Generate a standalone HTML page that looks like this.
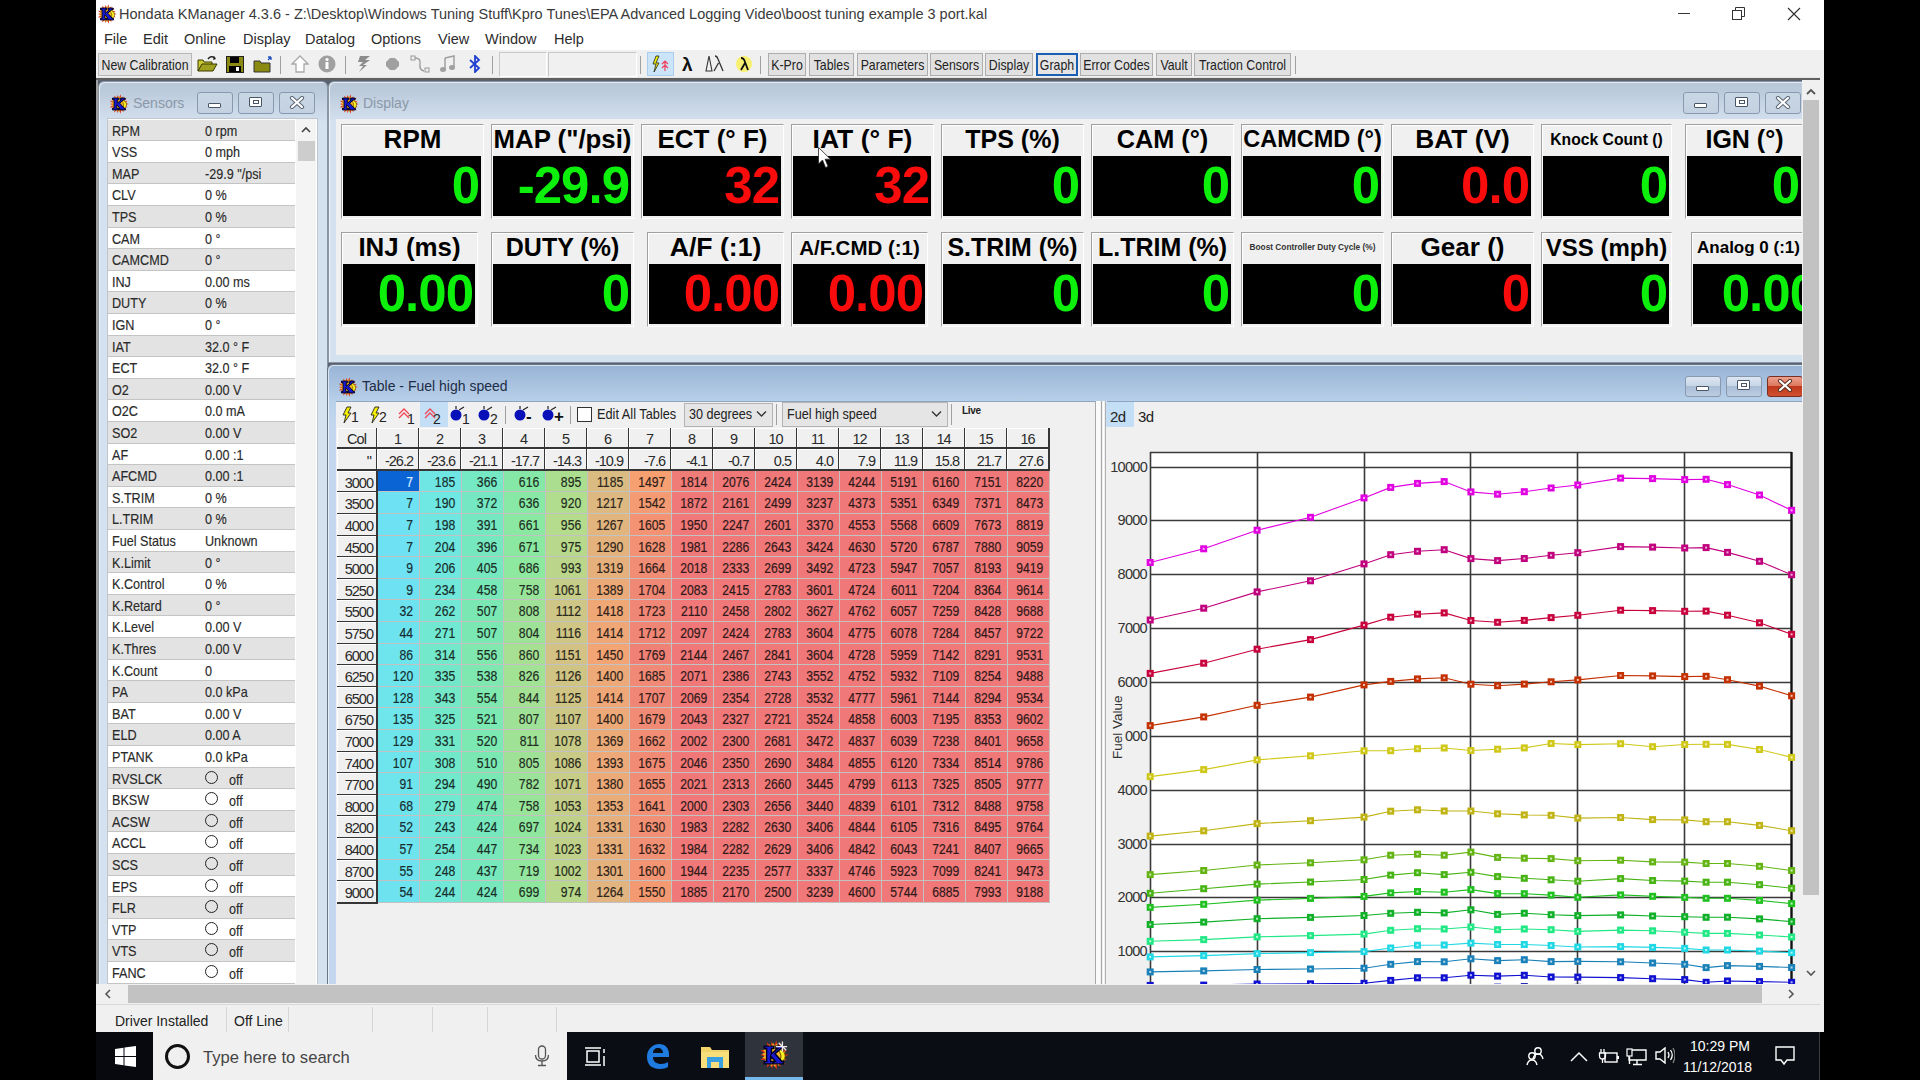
<!DOCTYPE html><html><head><meta charset="utf-8"><title>KManager</title><style>
*{box-sizing:border-box}
.cell span{display:inline-block;transform:scaleX(.84);transform-origin:100% 50%}
html,body{margin:0;padding:0}
body{width:1920px;height:1080px;background:#000;position:relative;overflow:hidden;font-family:"Liberation Sans",sans-serif;color:#000}
div{line-height:1}
.mf{border-radius:6px 6px 0 0}
.tb{font-size:14.5px;color:#222;transform:scaleX(.85);transform-origin:50% 0}
.btn{position:absolute;border:1px solid #adadad;background:#e1e1e1}
.wbtn{position:absolute;border:1px solid #8c9bb0;border-radius:3px;background:linear-gradient(#e4ecf5,#c9d7e8)}
.sl{font-size:14.5px;color:#2a2a2a;transform:scaleX(.87);transform-origin:0 0;-webkit-text-stroke:.15px currentColor}
.gl{position:absolute;text-align:center;font-weight:bold;color:#000;white-space:nowrap}
.gv{position:absolute;text-align:right;font-weight:bold;font-size:51px;letter-spacing:-1px;white-space:nowrap}
.cell{position:absolute;height:21px;text-align:right;font-size:14.5px;color:#1c1c1c;-webkit-text-stroke:.2px currentColor;padding-right:6px;padding-top:4px;border-right:1px solid #c2c2c2;border-bottom:1px solid #c2c2c2}
.hc{position:absolute;text-align:center;font-size:14.5px;letter-spacing:-1px;color:#2a2a2a;background:#f0f0f0;border-right:2px solid #363636;border-bottom:2px solid #363636;box-shadow:inset 1px 1px 0 #fff}
</style></head><body>
<div style="position:absolute;left:96px;top:0px;width:1728px;height:1032px;background:#ffffff"></div>
<svg style="position:absolute;left:97px;top:4px" width="20" height="20" viewBox="0 0 32 32">
<polygon points="31.8,16.0 25.8,17.7 29.6,21.0 24.7,21.0 28.1,26.2 22.4,23.7 23.2,28.6 19.4,25.4 18.7,31.6 16.0,26.0 13.5,30.3 12.6,25.4 8.1,29.7 9.6,23.7 4.9,25.3 7.3,21.0 1.2,21.4 6.2,17.7 1.5,16.0 6.2,14.3 1.2,10.6 7.3,11.0 4.9,6.7 9.6,8.3 8.1,2.3 12.6,6.6 13.5,1.7 16.0,6.0 18.7,0.4 19.4,6.6 23.2,3.4 22.4,8.3 28.1,5.8 24.7,11.0 29.6,11.0 25.8,14.3" fill="#e03010"/>
<polygon points="28.9,17.2 25.2,18.5 27.8,21.5 23.8,21.5 25.2,25.2 21.4,23.8 21.5,27.8 18.4,25.2 17.1,29.0 15.1,25.5 12.6,28.5 12.0,24.6 8.5,26.6 9.3,22.7 5.3,23.4 7.4,20.0 3.4,19.3 6.5,16.8 3.1,14.8 6.8,13.5 4.2,10.5 8.2,10.5 6.8,6.8 10.6,8.2 10.5,4.2 13.6,6.8 14.9,3.0 16.9,6.5 19.4,3.5 20.0,7.4 23.5,5.4 22.7,9.3 26.7,8.6 24.6,12.0 28.6,12.7 25.5,15.2" fill="#f8b828"/>
<path d="M19 9q9 2 9 8t-8 7q4-3 3.5-7T19 9z" fill="#fff020" stroke="#302000" stroke-width=".8"/>
<path transform="translate(15 16) scale(.86) translate(-16 -16)" d="M5 5h12v3h-3v6.5l7.5-6.5h-2V5h9v3h-2.5l-7.5 6.5 8.5 9.5h2v3H16.5v-3h2.5l-6-6.5v6.5h3v3H5v-3h3V8H5z" fill="#1818d0" stroke="#000020" stroke-width="1.8"/>
</svg>
<div style="position:absolute;left:119px;top:7px;white-space:pre;font-size:14.5px;color:#3a3a3a">Hondata KManager 4.3.6 - Z:\Desktop\Windows Tuning Stuff\Kpro Tunes\EPA Advanced Logging Video\boost tuning example 3 port.kal</div>
<div style="position:absolute;left:1678px;top:13px;width:12px;height:1px;background:#333"></div>
<svg style="position:absolute;left:1732px;top:7px" width="14" height="14" viewBox="0 0 14 14"><rect x="0.5" y="3.5" width="9" height="9" fill="none" stroke="#333"/><path d="M3.5 3.5V0.5h9v9h-3" fill="none" stroke="#333"/></svg>
<svg style="position:absolute;left:1787px;top:7px" width="14" height="14" viewBox="0 0 14 14"><path d="M1 1L13 13M13 1L1 13" stroke="#333" stroke-width="1.2"/></svg>
<div style="position:absolute;left:104px;top:32px;white-space:pre;font-size:14.5px;color:#2c2c2c">File</div>
<div style="position:absolute;left:143px;top:32px;white-space:pre;font-size:14.5px;color:#2c2c2c">Edit</div>
<div style="position:absolute;left:184px;top:32px;white-space:pre;font-size:14.5px;color:#2c2c2c">Online</div>
<div style="position:absolute;left:243px;top:32px;white-space:pre;font-size:14.5px;color:#2c2c2c">Display</div>
<div style="position:absolute;left:305px;top:32px;white-space:pre;font-size:14.5px;color:#2c2c2c">Datalog</div>
<div style="position:absolute;left:371px;top:32px;white-space:pre;font-size:14.5px;color:#2c2c2c">Options</div>
<div style="position:absolute;left:438px;top:32px;white-space:pre;font-size:14.5px;color:#2c2c2c">View</div>
<div style="position:absolute;left:485px;top:32px;white-space:pre;font-size:14.5px;color:#2c2c2c">Window</div>
<div style="position:absolute;left:554px;top:32px;white-space:pre;font-size:14.5px;color:#2c2c2c">Help</div>
<div style="position:absolute;left:96px;top:50px;width:1724px;height:28px;background:#f0f0f0"></div>
<div style="position:absolute;left:96px;top:77px;width:1724px;height:1px;background:#e6e6e6"></div>
<div style="position:absolute;left:96px;top:78px;width:1724px;height:2px;background:#606060"></div>
<div class="btn" style="left:98px;top:53px;width:94px;height:23px;background:#e3e3e3;border-color:#b8b8b8"></div>
<div class="tb" style="position:absolute;left:68px;top:58px;width:154px;text-align:center;white-space:nowrap">New Calibration</div>
<svg style="position:absolute;left:197px;top:55px" width="21" height="18" viewBox="0 0 21 18">
<path d="M1 5h5l1 2h8v3H5l-4 6z" fill="#c8c830" stroke="#3a3a00" stroke-width="1"/>
<path d="M1 16l4-7h15l-4 7z" fill="#a0a020" stroke="#3a3a00" stroke-width="1"/>
<path d="M11 4q3-4 7-1" fill="none" stroke="#222" stroke-width="1.5"/><path d="M17 1l2 3-3 1z" fill="#222"/></svg>
<svg style="position:absolute;left:226px;top:56px" width="18" height="17" viewBox="0 0 18 17">
<rect x="0.5" y="0.5" width="17" height="16" fill="#8a8a10" stroke="#222"/><rect x="4" y="1" width="9" height="6" fill="#000"/>
<rect x="3" y="10" width="12" height="6" fill="#000"/><rect x="10" y="11" width="3" height="4" fill="#fff"/></svg>
<svg style="position:absolute;left:253px;top:55px" width="21" height="18" viewBox="0 0 21 18">
<path d="M1 6h6l1 2h9v9H1z" fill="#8a8a10" stroke="#333"/><path d="M15 2l3 0M18 2v3M18 2l-3 3" stroke="#2050c0" stroke-width="1.3"/></svg>
<div style="position:absolute;left:280px;top:56px;width:1px;height:18px;background:#a0a0a0"></div>
<svg style="position:absolute;left:291px;top:55px" width="18" height="18" viewBox="0 0 18 18">
<path d="M9 1L1 9h4v8h8V9h4z" fill="#fff" stroke="#a8a8a8" stroke-width="1.3"/></svg>
<svg style="position:absolute;left:318px;top:55px" width="18" height="18" viewBox="0 0 18 18">
<circle cx="9" cy="9" r="8.5" fill="#a0a0a0"/><rect x="7.5" y="7" width="3" height="7" fill="#fff"/><circle cx="9" cy="4.5" r="1.6" fill="#fff"/></svg>
<div style="position:absolute;left:345px;top:56px;width:1px;height:18px;background:#a0a0a0"></div>
<svg style="position:absolute;left:356px;top:55px" width="16" height="18" viewBox="0 0 16 18">
<path d="M4 1h10l-5 4h5l-7 5h4L3 17l4-6H3l4-4H2z" fill="#8c8c8c"/></svg>
<svg style="position:absolute;left:386px;top:58px" width="13" height="12" viewBox="0 0 13 12"><path d="M4 0h5l4 4v4l-4 4H4L0 8V4z" fill="#a0a0a0"/></svg>
<svg style="position:absolute;left:410px;top:55px" width="21" height="20" viewBox="0 0 21 20">
<rect x="1" y="1" width="4" height="4" fill="none" stroke="#999"/><path d="M5 3q6 0 5 6t4 7" fill="none" stroke="#999" stroke-width="1.3"/><rect x="15" y="13" width="4" height="4" fill="none" stroke="#999"/></svg>
<svg style="position:absolute;left:440px;top:55px" width="15" height="18" viewBox="0 0 15 18">
<path d="M5 3l9-2v11" fill="none" stroke="#a0a0a0" stroke-width="1.5"/><path d="M5 3v11" stroke="#a0a0a0" stroke-width="1.5"/><ellipse cx="3" cy="14.5" rx="3" ry="2.5" fill="#a0a0a0"/><ellipse cx="12" cy="12.5" rx="3" ry="2.5" fill="#a0a0a0"/></svg>
<svg style="position:absolute;left:468px;top:55px" width="14" height="18" viewBox="0 0 14 18">
<path d="M2 5l9 8-4 4V1l4 4-9 8" fill="none" stroke="#2040d0" stroke-width="1.8"/></svg>
<div style="position:absolute;left:492px;top:56px;width:1px;height:18px;background:#a0a0a0"></div>
<div style="position:absolute;left:499px;top:52px;width:48px;height:25px;background:#f0f0f0;border:1px solid #c8c8c8;border-right-color:#fff;border-bottom-color:#fff"></div>
<div style="position:absolute;left:548px;top:52px;width:89px;height:25px;background:#f0f0f0;border:1px solid #c8c8c8;border-right-color:#fff;border-bottom-color:#fff"></div>
<div style="position:absolute;left:640px;top:56px;width:1px;height:18px;background:#a0a0a0"></div>
<div style="position:absolute;left:647px;top:52px;width:27px;height:24px;background:#cce4f7;border:1px solid #a8cdef"></div>
<svg style="position:absolute;left:650px;top:55px" width="22" height="18" viewBox="0 0 22 18">
<path d="M6 1l-3 8h3l-2 8 5-9H6l3-7z" fill="#f0f000" stroke="#222" stroke-width=".8"/>
<path d="M12 9l3-3 3 3M12 13l3-3 3 3M15 6v10" fill="none" stroke="#f04060" stroke-width="1.2"/></svg>
<div style="position:absolute;left:682px;top:55px;white-space:pre;font-size:19px;font-weight:bold;color:#111">λ</div>
<svg style="position:absolute;left:705px;top:55px" width="20" height="18" viewBox="0 0 20 18">
<path d="M4 1L1 16h6z" fill="none" stroke="#333" stroke-width="1.1"/><path d="M10 1q2 0 3 3l5 12M13.5 8L9 16" fill="none" stroke="#333" stroke-width="1.3"/></svg>
<svg style="position:absolute;left:735px;top:55px" width="18" height="18" viewBox="0 0 18 18">
<circle cx="9" cy="9" r="8" fill="#f8f070"/><path d="M6 3q3 0 4 4l3 8M10 8l-4 7" fill="none" stroke="#111" stroke-width="1.8"/></svg>
<div style="position:absolute;left:760px;top:56px;width:1px;height:18px;background:#a0a0a0"></div>
<div class="btn" style="left:768px;top:53px;width:38px;height:23px;"></div>
<div class="tb" style="position:absolute;left:738px;top:58px;width:98px;text-align:center;white-space:nowrap">K-Pro</div>
<div class="btn" style="left:809px;top:53px;width:45px;height:23px;"></div>
<div class="tb" style="position:absolute;left:779px;top:58px;width:105px;text-align:center;white-space:nowrap">Tables</div>
<div class="btn" style="left:857px;top:53px;width:71px;height:23px;"></div>
<div class="tb" style="position:absolute;left:827px;top:58px;width:131px;text-align:center;white-space:nowrap">Parameters</div>
<div class="btn" style="left:930px;top:53px;width:53px;height:23px;"></div>
<div class="tb" style="position:absolute;left:900px;top:58px;width:113px;text-align:center;white-space:nowrap">Sensors</div>
<div class="btn" style="left:985px;top:53px;width:48px;height:23px;"></div>
<div class="tb" style="position:absolute;left:955px;top:58px;width:108px;text-align:center;white-space:nowrap">Display</div>
<div class="btn" style="left:1080px;top:53px;width:73px;height:23px;"></div>
<div class="tb" style="position:absolute;left:1050px;top:58px;width:133px;text-align:center;white-space:nowrap">Error Codes</div>
<div class="btn" style="left:1156px;top:53px;width:36px;height:23px;"></div>
<div class="tb" style="position:absolute;left:1126px;top:58px;width:96px;text-align:center;white-space:nowrap">Vault</div>
<div class="btn" style="left:1194px;top:53px;width:97px;height:23px;"></div>
<div class="tb" style="position:absolute;left:1164px;top:58px;width:157px;text-align:center;white-space:nowrap">Traction Control</div>
<div class="btn" style="left:1036px;top:53px;width:42px;height:23px;border:2px solid #1a5fb4;background:#e5e5e5"></div>
<div class="tb" style="position:absolute;left:1006px;top:58px;width:102px;text-align:center;white-space:nowrap">Graph</div>
<div style="position:absolute;left:1295px;top:56px;width:1px;height:18px;background:#a0a0a0"></div>
<div style="position:absolute;left:96px;top:80px;width:1724px;height:904px;background:#5a6272"></div>
<div style="position:absolute;left:96px;top:80px;width:2px;height:904px;background:#a0a0a0"></div>
<div class="mf" style="position:absolute;left:98px;top:81px;width:230px;height:940px;background:linear-gradient(180deg,#b8c8d9 0px,#bccbdc 10px,#c6d4e4 22px,#cfdded 36px,#d4e1ef 40px,#d4e1ef);border:1px solid #8a96a4;box-shadow:inset 1px 1px 0 rgba(255,255,255,.6)"></div>
<svg style="position:absolute;left:109px;top:94px" width="20" height="20" viewBox="0 0 32 32">
<polygon points="31.8,16.0 25.8,17.7 29.6,21.0 24.7,21.0 28.1,26.2 22.4,23.7 23.2,28.6 19.4,25.4 18.7,31.6 16.0,26.0 13.5,30.3 12.6,25.4 8.1,29.7 9.6,23.7 4.9,25.3 7.3,21.0 1.2,21.4 6.2,17.7 1.5,16.0 6.2,14.3 1.2,10.6 7.3,11.0 4.9,6.7 9.6,8.3 8.1,2.3 12.6,6.6 13.5,1.7 16.0,6.0 18.7,0.4 19.4,6.6 23.2,3.4 22.4,8.3 28.1,5.8 24.7,11.0 29.6,11.0 25.8,14.3" fill="#e03010"/>
<polygon points="28.9,17.2 25.2,18.5 27.8,21.5 23.8,21.5 25.2,25.2 21.4,23.8 21.5,27.8 18.4,25.2 17.1,29.0 15.1,25.5 12.6,28.5 12.0,24.6 8.5,26.6 9.3,22.7 5.3,23.4 7.4,20.0 3.4,19.3 6.5,16.8 3.1,14.8 6.8,13.5 4.2,10.5 8.2,10.5 6.8,6.8 10.6,8.2 10.5,4.2 13.6,6.8 14.9,3.0 16.9,6.5 19.4,3.5 20.0,7.4 23.5,5.4 22.7,9.3 26.7,8.6 24.6,12.0 28.6,12.7 25.5,15.2" fill="#f8b828"/>
<path d="M19 9q9 2 9 8t-8 7q4-3 3.5-7T19 9z" fill="#fff020" stroke="#302000" stroke-width=".8"/>
<path transform="translate(15 16) scale(.86) translate(-16 -16)" d="M5 5h12v3h-3v6.5l7.5-6.5h-2V5h9v3h-2.5l-7.5 6.5 8.5 9.5h2v3H16.5v-3h2.5l-6-6.5v6.5h3v3H5v-3h3V8H5z" fill="#1818d0" stroke="#000020" stroke-width="1.8"/>
</svg>
<div style="position:absolute;left:133px;top:96px;white-space:pre;font-size:14px;color:#8b98a8">Sensors</div>
<div class="wbtn" style="left:197px;top:92px;width:36px;height:22px;background:linear-gradient(#c9d6e4,#c3d1e1);border-color:#8898ae"></div>
<div style="position:absolute;left:208px;top:103px;width:13px;height:5px;border:1.5px solid #4a5566;background:#fff;border-radius:1px"></div>
<div class="wbtn" style="left:238px;top:92px;width:36px;height:22px;background:linear-gradient(#c9d6e4,#c3d1e1);border-color:#8898ae"></div>
<div style="position:absolute;left:249px;top:97px;width:13px;height:10px;border:1.5px solid #4a5566;background:#fff;border-radius:1px"></div><div style="position:absolute;left:253px;top:100px;width:6px;height:4px;border:1.5px solid #4a5566"></div>
<div class="wbtn" style="left:279px;top:92px;width:36px;height:22px;background:linear-gradient(#c9d6e4,#c3d1e1);border-color:#8898ae"></div>
<svg style="position:absolute;left:289px;top:96px" width="16" height="13" viewBox="0 0 16 13"><path d="M3 2L13 11M13 2L3 11" stroke="#5a6676" stroke-width="4.2" stroke-linecap="round"/><path d="M3 2L13 11M13 2L3 11" stroke="#fff" stroke-width="2.2" stroke-linecap="round"/></svg>
<div style="position:absolute;left:107px;top:118px;width:211px;height:867px;background:#fff;border:1px solid #c0c6ce"></div>
<div style="position:absolute;left:108px;top:120px;width:187px;height:21px;background:#e3e3e3;border-bottom:1px solid #c4c4c4"></div>
<div class="sl" style="position:absolute;left:112px;top:124px;white-space:pre;">RPM</div>
<div class="sl" style="position:absolute;left:205px;top:124px;white-space:pre;">0 rpm</div>
<div style="position:absolute;left:108px;top:141px;width:187px;height:22px;background:#ffffff;border-bottom:1px solid #c4c4c4"></div>
<div class="sl" style="position:absolute;left:112px;top:145px;white-space:pre;">VSS</div>
<div class="sl" style="position:absolute;left:205px;top:145px;white-space:pre;">0 mph</div>
<div style="position:absolute;left:108px;top:163px;width:187px;height:21px;background:#e3e3e3;border-bottom:1px solid #c4c4c4"></div>
<div class="sl" style="position:absolute;left:112px;top:167px;white-space:pre;">MAP</div>
<div class="sl" style="position:absolute;left:205px;top:167px;white-space:pre;">-29.9 "/psi</div>
<div style="position:absolute;left:108px;top:184px;width:187px;height:22px;background:#ffffff;border-bottom:1px solid #c4c4c4"></div>
<div class="sl" style="position:absolute;left:112px;top:188px;white-space:pre;">CLV</div>
<div class="sl" style="position:absolute;left:205px;top:188px;white-space:pre;">0 %</div>
<div style="position:absolute;left:108px;top:206px;width:187px;height:22px;background:#e3e3e3;border-bottom:1px solid #c4c4c4"></div>
<div class="sl" style="position:absolute;left:112px;top:210px;white-space:pre;">TPS</div>
<div class="sl" style="position:absolute;left:205px;top:210px;white-space:pre;">0 %</div>
<div style="position:absolute;left:108px;top:228px;width:187px;height:21px;background:#ffffff;border-bottom:1px solid #c4c4c4"></div>
<div class="sl" style="position:absolute;left:112px;top:232px;white-space:pre;">CAM</div>
<div class="sl" style="position:absolute;left:205px;top:232px;white-space:pre;">0 °</div>
<div style="position:absolute;left:108px;top:249px;width:187px;height:22px;background:#e3e3e3;border-bottom:1px solid #c4c4c4"></div>
<div class="sl" style="position:absolute;left:112px;top:253px;white-space:pre;">CAMCMD</div>
<div class="sl" style="position:absolute;left:205px;top:253px;white-space:pre;">0 °</div>
<div style="position:absolute;left:108px;top:271px;width:187px;height:21px;background:#ffffff;border-bottom:1px solid #c4c4c4"></div>
<div class="sl" style="position:absolute;left:112px;top:275px;white-space:pre;">INJ</div>
<div class="sl" style="position:absolute;left:205px;top:275px;white-space:pre;">0.00 ms</div>
<div style="position:absolute;left:108px;top:292px;width:187px;height:22px;background:#e3e3e3;border-bottom:1px solid #c4c4c4"></div>
<div class="sl" style="position:absolute;left:112px;top:296px;white-space:pre;">DUTY</div>
<div class="sl" style="position:absolute;left:205px;top:296px;white-space:pre;">0 %</div>
<div style="position:absolute;left:108px;top:314px;width:187px;height:22px;background:#ffffff;border-bottom:1px solid #c4c4c4"></div>
<div class="sl" style="position:absolute;left:112px;top:318px;white-space:pre;">IGN</div>
<div class="sl" style="position:absolute;left:205px;top:318px;white-space:pre;">0 °</div>
<div style="position:absolute;left:108px;top:336px;width:187px;height:21px;background:#e3e3e3;border-bottom:1px solid #c4c4c4"></div>
<div class="sl" style="position:absolute;left:112px;top:340px;white-space:pre;">IAT</div>
<div class="sl" style="position:absolute;left:205px;top:340px;white-space:pre;">32.0 ° F</div>
<div style="position:absolute;left:108px;top:357px;width:187px;height:22px;background:#ffffff;border-bottom:1px solid #c4c4c4"></div>
<div class="sl" style="position:absolute;left:112px;top:361px;white-space:pre;">ECT</div>
<div class="sl" style="position:absolute;left:205px;top:361px;white-space:pre;">32.0 ° F</div>
<div style="position:absolute;left:108px;top:379px;width:187px;height:21px;background:#e3e3e3;border-bottom:1px solid #c4c4c4"></div>
<div class="sl" style="position:absolute;left:112px;top:383px;white-space:pre;">O2</div>
<div class="sl" style="position:absolute;left:205px;top:383px;white-space:pre;">0.00 V</div>
<div style="position:absolute;left:108px;top:400px;width:187px;height:22px;background:#ffffff;border-bottom:1px solid #c4c4c4"></div>
<div class="sl" style="position:absolute;left:112px;top:404px;white-space:pre;">O2C</div>
<div class="sl" style="position:absolute;left:205px;top:404px;white-space:pre;">0.0 mA</div>
<div style="position:absolute;left:108px;top:422px;width:187px;height:22px;background:#e3e3e3;border-bottom:1px solid #c4c4c4"></div>
<div class="sl" style="position:absolute;left:112px;top:426px;white-space:pre;">SO2</div>
<div class="sl" style="position:absolute;left:205px;top:426px;white-space:pre;">0.00 V</div>
<div style="position:absolute;left:108px;top:444px;width:187px;height:21px;background:#ffffff;border-bottom:1px solid #c4c4c4"></div>
<div class="sl" style="position:absolute;left:112px;top:448px;white-space:pre;">AF</div>
<div class="sl" style="position:absolute;left:205px;top:448px;white-space:pre;">0.00 :1</div>
<div style="position:absolute;left:108px;top:465px;width:187px;height:22px;background:#e3e3e3;border-bottom:1px solid #c4c4c4"></div>
<div class="sl" style="position:absolute;left:112px;top:469px;white-space:pre;">AFCMD</div>
<div class="sl" style="position:absolute;left:205px;top:469px;white-space:pre;">0.00 :1</div>
<div style="position:absolute;left:108px;top:487px;width:187px;height:21px;background:#ffffff;border-bottom:1px solid #c4c4c4"></div>
<div class="sl" style="position:absolute;left:112px;top:491px;white-space:pre;">S.TRIM</div>
<div class="sl" style="position:absolute;left:205px;top:491px;white-space:pre;">0 %</div>
<div style="position:absolute;left:108px;top:508px;width:187px;height:22px;background:#e3e3e3;border-bottom:1px solid #c4c4c4"></div>
<div class="sl" style="position:absolute;left:112px;top:512px;white-space:pre;">L.TRIM</div>
<div class="sl" style="position:absolute;left:205px;top:512px;white-space:pre;">0 %</div>
<div style="position:absolute;left:108px;top:530px;width:187px;height:22px;background:#ffffff;border-bottom:1px solid #c4c4c4"></div>
<div class="sl" style="position:absolute;left:112px;top:534px;white-space:pre;">Fuel Status</div>
<div class="sl" style="position:absolute;left:205px;top:534px;white-space:pre;">Unknown</div>
<div style="position:absolute;left:108px;top:552px;width:187px;height:21px;background:#e3e3e3;border-bottom:1px solid #c4c4c4"></div>
<div class="sl" style="position:absolute;left:112px;top:556px;white-space:pre;">K.Limit</div>
<div class="sl" style="position:absolute;left:205px;top:556px;white-space:pre;">0 °</div>
<div style="position:absolute;left:108px;top:573px;width:187px;height:22px;background:#ffffff;border-bottom:1px solid #c4c4c4"></div>
<div class="sl" style="position:absolute;left:112px;top:577px;white-space:pre;">K.Control</div>
<div class="sl" style="position:absolute;left:205px;top:577px;white-space:pre;">0 %</div>
<div style="position:absolute;left:108px;top:595px;width:187px;height:21px;background:#e3e3e3;border-bottom:1px solid #c4c4c4"></div>
<div class="sl" style="position:absolute;left:112px;top:599px;white-space:pre;">K.Retard</div>
<div class="sl" style="position:absolute;left:205px;top:599px;white-space:pre;">0 °</div>
<div style="position:absolute;left:108px;top:616px;width:187px;height:22px;background:#ffffff;border-bottom:1px solid #c4c4c4"></div>
<div class="sl" style="position:absolute;left:112px;top:620px;white-space:pre;">K.Level</div>
<div class="sl" style="position:absolute;left:205px;top:620px;white-space:pre;">0.00 V</div>
<div style="position:absolute;left:108px;top:638px;width:187px;height:22px;background:#e3e3e3;border-bottom:1px solid #c4c4c4"></div>
<div class="sl" style="position:absolute;left:112px;top:642px;white-space:pre;">K.Thres</div>
<div class="sl" style="position:absolute;left:205px;top:642px;white-space:pre;">0.00 V</div>
<div style="position:absolute;left:108px;top:660px;width:187px;height:21px;background:#ffffff;border-bottom:1px solid #c4c4c4"></div>
<div class="sl" style="position:absolute;left:112px;top:664px;white-space:pre;">K.Count</div>
<div class="sl" style="position:absolute;left:205px;top:664px;white-space:pre;">0</div>
<div style="position:absolute;left:108px;top:681px;width:187px;height:22px;background:#e3e3e3;border-bottom:1px solid #c4c4c4"></div>
<div class="sl" style="position:absolute;left:112px;top:685px;white-space:pre;">PA</div>
<div class="sl" style="position:absolute;left:205px;top:685px;white-space:pre;">0.0 kPa</div>
<div style="position:absolute;left:108px;top:703px;width:187px;height:21px;background:#ffffff;border-bottom:1px solid #c4c4c4"></div>
<div class="sl" style="position:absolute;left:112px;top:707px;white-space:pre;">BAT</div>
<div class="sl" style="position:absolute;left:205px;top:707px;white-space:pre;">0.00 V</div>
<div style="position:absolute;left:108px;top:724px;width:187px;height:22px;background:#e3e3e3;border-bottom:1px solid #c4c4c4"></div>
<div class="sl" style="position:absolute;left:112px;top:728px;white-space:pre;">ELD</div>
<div class="sl" style="position:absolute;left:205px;top:728px;white-space:pre;">0.00 A</div>
<div style="position:absolute;left:108px;top:746px;width:187px;height:22px;background:#ffffff;border-bottom:1px solid #c4c4c4"></div>
<div class="sl" style="position:absolute;left:112px;top:750px;white-space:pre;">PTANK</div>
<div class="sl" style="position:absolute;left:205px;top:750px;white-space:pre;">0.0 kPa</div>
<div style="position:absolute;left:108px;top:768px;width:187px;height:21px;background:#e3e3e3;border-bottom:1px solid #c4c4c4"></div>
<div class="sl" style="position:absolute;left:112px;top:772px;white-space:pre;">RVSLCK</div>
<div style="position:absolute;left:205px;top:771px;width:13px;height:13px;border:1.2px solid #222;border-radius:50%;background:transparent"></div>
<div class="sl" style="position:absolute;left:229px;top:773px;white-space:pre;">off</div>
<div style="position:absolute;left:108px;top:789px;width:187px;height:22px;background:#ffffff;border-bottom:1px solid #c4c4c4"></div>
<div class="sl" style="position:absolute;left:112px;top:793px;white-space:pre;">BKSW</div>
<div style="position:absolute;left:205px;top:792px;width:13px;height:13px;border:1.2px solid #222;border-radius:50%;background:transparent"></div>
<div class="sl" style="position:absolute;left:229px;top:794px;white-space:pre;">off</div>
<div style="position:absolute;left:108px;top:811px;width:187px;height:21px;background:#e3e3e3;border-bottom:1px solid #c4c4c4"></div>
<div class="sl" style="position:absolute;left:112px;top:815px;white-space:pre;">ACSW</div>
<div style="position:absolute;left:205px;top:814px;width:13px;height:13px;border:1.2px solid #222;border-radius:50%;background:transparent"></div>
<div class="sl" style="position:absolute;left:229px;top:816px;white-space:pre;">off</div>
<div style="position:absolute;left:108px;top:832px;width:187px;height:22px;background:#ffffff;border-bottom:1px solid #c4c4c4"></div>
<div class="sl" style="position:absolute;left:112px;top:836px;white-space:pre;">ACCL</div>
<div style="position:absolute;left:205px;top:835px;width:13px;height:13px;border:1.2px solid #222;border-radius:50%;background:transparent"></div>
<div class="sl" style="position:absolute;left:229px;top:837px;white-space:pre;">off</div>
<div style="position:absolute;left:108px;top:854px;width:187px;height:22px;background:#e3e3e3;border-bottom:1px solid #c4c4c4"></div>
<div class="sl" style="position:absolute;left:112px;top:858px;white-space:pre;">SCS</div>
<div style="position:absolute;left:205px;top:857px;width:13px;height:13px;border:1.2px solid #222;border-radius:50%;background:transparent"></div>
<div class="sl" style="position:absolute;left:229px;top:859px;white-space:pre;">off</div>
<div style="position:absolute;left:108px;top:876px;width:187px;height:21px;background:#ffffff;border-bottom:1px solid #c4c4c4"></div>
<div class="sl" style="position:absolute;left:112px;top:880px;white-space:pre;">EPS</div>
<div style="position:absolute;left:205px;top:879px;width:13px;height:13px;border:1.2px solid #222;border-radius:50%;background:transparent"></div>
<div class="sl" style="position:absolute;left:229px;top:881px;white-space:pre;">off</div>
<div style="position:absolute;left:108px;top:897px;width:187px;height:22px;background:#e3e3e3;border-bottom:1px solid #c4c4c4"></div>
<div class="sl" style="position:absolute;left:112px;top:901px;white-space:pre;">FLR</div>
<div style="position:absolute;left:205px;top:900px;width:13px;height:13px;border:1.2px solid #222;border-radius:50%;background:transparent"></div>
<div class="sl" style="position:absolute;left:229px;top:902px;white-space:pre;">off</div>
<div style="position:absolute;left:108px;top:919px;width:187px;height:21px;background:#ffffff;border-bottom:1px solid #c4c4c4"></div>
<div class="sl" style="position:absolute;left:112px;top:923px;white-space:pre;">VTP</div>
<div style="position:absolute;left:205px;top:922px;width:13px;height:13px;border:1.2px solid #222;border-radius:50%;background:transparent"></div>
<div class="sl" style="position:absolute;left:229px;top:924px;white-space:pre;">off</div>
<div style="position:absolute;left:108px;top:940px;width:187px;height:22px;background:#e3e3e3;border-bottom:1px solid #c4c4c4"></div>
<div class="sl" style="position:absolute;left:112px;top:944px;white-space:pre;">VTS</div>
<div style="position:absolute;left:205px;top:943px;width:13px;height:13px;border:1.2px solid #222;border-radius:50%;background:transparent"></div>
<div class="sl" style="position:absolute;left:229px;top:945px;white-space:pre;">off</div>
<div style="position:absolute;left:108px;top:962px;width:187px;height:22px;background:#ffffff;border-bottom:1px solid #c4c4c4"></div>
<div class="sl" style="position:absolute;left:112px;top:966px;white-space:pre;">FANC</div>
<div style="position:absolute;left:205px;top:965px;width:13px;height:13px;border:1.2px solid #222;border-radius:50%;background:transparent"></div>
<div class="sl" style="position:absolute;left:229px;top:967px;white-space:pre;">off</div>
<div style="position:absolute;left:295px;top:119px;width:22px;height:866px;background:#f4f4f4;border-left:1px solid #fff;border-right:1px solid #fff"></div>
<svg style="position:absolute;left:301px;top:126px" width="10" height="7" viewBox="0 0 10 7"><path d="M1 6L5 2L9 6" fill="none" stroke="#444" stroke-width="1.6"/></svg>
<div style="position:absolute;left:298px;top:141px;width:17px;height:20px;background:#cdcdcd"></div>
<div class="mf" style="position:absolute;left:328px;top:81px;width:1490px;height:282px;background:linear-gradient(180deg,#b8c8d9 0px,#bccbdc 10px,#c6d4e4 22px,#cfdded 36px,#d4e1ef 40px,#d4e1ef);border:1px solid #8a96a4;box-shadow:inset 1px 1px 0 rgba(255,255,255,.6)"></div>
<svg style="position:absolute;left:339px;top:94px" width="20" height="20" viewBox="0 0 32 32">
<polygon points="31.8,16.0 25.8,17.7 29.6,21.0 24.7,21.0 28.1,26.2 22.4,23.7 23.2,28.6 19.4,25.4 18.7,31.6 16.0,26.0 13.5,30.3 12.6,25.4 8.1,29.7 9.6,23.7 4.9,25.3 7.3,21.0 1.2,21.4 6.2,17.7 1.5,16.0 6.2,14.3 1.2,10.6 7.3,11.0 4.9,6.7 9.6,8.3 8.1,2.3 12.6,6.6 13.5,1.7 16.0,6.0 18.7,0.4 19.4,6.6 23.2,3.4 22.4,8.3 28.1,5.8 24.7,11.0 29.6,11.0 25.8,14.3" fill="#e03010"/>
<polygon points="28.9,17.2 25.2,18.5 27.8,21.5 23.8,21.5 25.2,25.2 21.4,23.8 21.5,27.8 18.4,25.2 17.1,29.0 15.1,25.5 12.6,28.5 12.0,24.6 8.5,26.6 9.3,22.7 5.3,23.4 7.4,20.0 3.4,19.3 6.5,16.8 3.1,14.8 6.8,13.5 4.2,10.5 8.2,10.5 6.8,6.8 10.6,8.2 10.5,4.2 13.6,6.8 14.9,3.0 16.9,6.5 19.4,3.5 20.0,7.4 23.5,5.4 22.7,9.3 26.7,8.6 24.6,12.0 28.6,12.7 25.5,15.2" fill="#f8b828"/>
<path d="M19 9q9 2 9 8t-8 7q4-3 3.5-7T19 9z" fill="#fff020" stroke="#302000" stroke-width=".8"/>
<path transform="translate(15 16) scale(.86) translate(-16 -16)" d="M5 5h12v3h-3v6.5l7.5-6.5h-2V5h9v3h-2.5l-7.5 6.5 8.5 9.5h2v3H16.5v-3h2.5l-6-6.5v6.5h3v3H5v-3h3V8H5z" fill="#1818d0" stroke="#000020" stroke-width="1.8"/>
</svg>
<div style="position:absolute;left:363px;top:96px;white-space:pre;font-size:14px;color:#8b98a8">Display</div>
<div class="wbtn" style="left:1683px;top:92px;width:36px;height:22px;background:linear-gradient(#c9d6e4,#c3d1e1);border-color:#8898ae"></div>
<div style="position:absolute;left:1694px;top:103px;width:13px;height:5px;border:1.5px solid #4a5566;background:#fff;border-radius:1px"></div>
<div class="wbtn" style="left:1724px;top:92px;width:36px;height:22px;background:linear-gradient(#c9d6e4,#c3d1e1);border-color:#8898ae"></div>
<div style="position:absolute;left:1735px;top:97px;width:13px;height:10px;border:1.5px solid #4a5566;background:#fff;border-radius:1px"></div><div style="position:absolute;left:1739px;top:100px;width:6px;height:4px;border:1.5px solid #4a5566"></div>
<div class="wbtn" style="left:1765px;top:92px;width:36px;height:22px;background:linear-gradient(#c9d6e4,#c3d1e1);border-color:#8898ae"></div>
<svg style="position:absolute;left:1775px;top:96px" width="16" height="13" viewBox="0 0 16 13"><path d="M3 2L13 11M13 2L3 11" stroke="#5a6676" stroke-width="4.2" stroke-linecap="round"/><path d="M3 2L13 11M13 2L3 11" stroke="#fff" stroke-width="2.2" stroke-linecap="round"/></svg>
<div style="position:absolute;left:336px;top:119px;width:1466px;height:236px;background:#f0f0f0"></div>
<div style="position:absolute;left:341px;top:124px;width:143px;height:95px;border-top:1px solid #a0a0a0;border-left:1px solid #a0a0a0;border-right:1px solid #fff;border-bottom:1px solid #fff;box-shadow:inset 1px 1px 0 #fff"></div>
<div style="position:absolute;left:343px;top:156px;width:138px;height:60px;background:#000"></div>
<div class="gl" style="left:341px;top:124px;width:143px;height:31px;line-height:31px;font-size:26px;">RPM</div>
<div class="gv" style="left:343px;top:160px;width:136px;color:#0cf00c">0</div>
<div style="position:absolute;left:491px;top:124px;width:143px;height:95px;border-top:1px solid #a0a0a0;border-left:1px solid #a0a0a0;border-right:1px solid #fff;border-bottom:1px solid #fff;box-shadow:inset 1px 1px 0 #fff"></div>
<div style="position:absolute;left:493px;top:156px;width:138px;height:60px;background:#000"></div>
<div class="gl" style="left:491px;top:124px;width:143px;height:31px;line-height:31px;font-size:25.8px;">MAP ("/psi)</div>
<div class="gv" style="left:493px;top:160px;width:136px;color:#0cf00c">-29.9</div>
<div style="position:absolute;left:641px;top:124px;width:143px;height:95px;border-top:1px solid #a0a0a0;border-left:1px solid #a0a0a0;border-right:1px solid #fff;border-bottom:1px solid #fff;box-shadow:inset 1px 1px 0 #fff"></div>
<div style="position:absolute;left:643px;top:156px;width:138px;height:60px;background:#000"></div>
<div class="gl" style="left:641px;top:124px;width:143px;height:31px;line-height:31px;font-size:26px;">ECT (° F)</div>
<div class="gv" style="left:643px;top:160px;width:136px;color:#fa0c0c">32</div>
<div style="position:absolute;left:791px;top:124px;width:143px;height:95px;border-top:1px solid #a0a0a0;border-left:1px solid #a0a0a0;border-right:1px solid #fff;border-bottom:1px solid #fff;box-shadow:inset 1px 1px 0 #fff"></div>
<div style="position:absolute;left:793px;top:156px;width:138px;height:60px;background:#000"></div>
<div class="gl" style="left:791px;top:124px;width:143px;height:31px;line-height:31px;font-size:26.5px;">IAT (° F)</div>
<div class="gv" style="left:793px;top:160px;width:136px;color:#fa0c0c">32</div>
<div style="position:absolute;left:941px;top:124px;width:143px;height:95px;border-top:1px solid #a0a0a0;border-left:1px solid #a0a0a0;border-right:1px solid #fff;border-bottom:1px solid #fff;box-shadow:inset 1px 1px 0 #fff"></div>
<div style="position:absolute;left:943px;top:156px;width:138px;height:60px;background:#000"></div>
<div class="gl" style="left:941px;top:124px;width:143px;height:31px;line-height:31px;font-size:25px;">TPS (%)</div>
<div class="gv" style="left:943px;top:160px;width:136px;color:#0cf00c">0</div>
<div style="position:absolute;left:1091px;top:124px;width:143px;height:95px;border-top:1px solid #a0a0a0;border-left:1px solid #a0a0a0;border-right:1px solid #fff;border-bottom:1px solid #fff;box-shadow:inset 1px 1px 0 #fff"></div>
<div style="position:absolute;left:1093px;top:156px;width:138px;height:60px;background:#000"></div>
<div class="gl" style="left:1091px;top:124px;width:143px;height:31px;line-height:31px;font-size:25.3px;">CAM (°)</div>
<div class="gv" style="left:1093px;top:160px;width:136px;color:#0cf00c">0</div>
<div style="position:absolute;left:1241px;top:124px;width:143px;height:95px;border-top:1px solid #a0a0a0;border-left:1px solid #a0a0a0;border-right:1px solid #fff;border-bottom:1px solid #fff;box-shadow:inset 1px 1px 0 #fff"></div>
<div style="position:absolute;left:1243px;top:156px;width:138px;height:60px;background:#000"></div>
<div class="gl" style="left:1241px;top:124px;width:143px;height:31px;line-height:31px;font-size:23.5px;">CAMCMD (°)</div>
<div class="gv" style="left:1243px;top:160px;width:136px;color:#0cf00c">0</div>
<div style="position:absolute;left:1391px;top:124px;width:143px;height:95px;border-top:1px solid #a0a0a0;border-left:1px solid #a0a0a0;border-right:1px solid #fff;border-bottom:1px solid #fff;box-shadow:inset 1px 1px 0 #fff"></div>
<div style="position:absolute;left:1393px;top:156px;width:138px;height:60px;background:#000"></div>
<div class="gl" style="left:1391px;top:124px;width:143px;height:31px;line-height:31px;font-size:26.3px;">BAT (V)</div>
<div class="gv" style="left:1393px;top:160px;width:136px;color:#fa0c0c">0.0</div>
<div style="position:absolute;left:1541px;top:124px;width:131px;height:95px;border-top:1px solid #a0a0a0;border-left:1px solid #a0a0a0;border-right:1px solid #fff;border-bottom:1px solid #fff;box-shadow:inset 1px 1px 0 #fff"></div>
<div style="position:absolute;left:1543px;top:156px;width:126px;height:60px;background:#000"></div>
<div class="gl" style="left:1541px;top:124px;width:131px;height:31px;line-height:31px;font-size:15.7px;">Knock Count ()</div>
<div class="gv" style="left:1543px;top:160px;width:124px;color:#0cf00c">0</div>
<div style="position:absolute;left:1685px;top:124px;width:119px;height:95px;border-top:1px solid #a0a0a0;border-left:1px solid #a0a0a0;border-right:1px solid #fff;border-bottom:1px solid #fff;box-shadow:inset 1px 1px 0 #fff"></div>
<div style="position:absolute;left:1687px;top:156px;width:114px;height:60px;background:#000"></div>
<div class="gl" style="left:1685px;top:124px;width:119px;height:31px;line-height:31px;font-size:25px;">IGN (°)</div>
<div class="gv" style="left:1687px;top:160px;width:112px;color:#0cf00c">0</div>
<div style="position:absolute;left:341px;top:232px;width:137px;height:95px;border-top:1px solid #a0a0a0;border-left:1px solid #a0a0a0;border-right:1px solid #fff;border-bottom:1px solid #fff;box-shadow:inset 1px 1px 0 #fff"></div>
<div style="position:absolute;left:343px;top:264px;width:132px;height:60px;background:#000"></div>
<div class="gl" style="left:341px;top:232px;width:137px;height:31px;line-height:31px;font-size:25.9px;">INJ (ms)</div>
<div class="gv" style="left:343px;top:268px;width:130px;color:#0cf00c">0.00</div>
<div style="position:absolute;left:491px;top:232px;width:143px;height:95px;border-top:1px solid #a0a0a0;border-left:1px solid #a0a0a0;border-right:1px solid #fff;border-bottom:1px solid #fff;box-shadow:inset 1px 1px 0 #fff"></div>
<div style="position:absolute;left:493px;top:264px;width:138px;height:60px;background:#000"></div>
<div class="gl" style="left:491px;top:232px;width:143px;height:31px;line-height:31px;font-size:25px;">DUTY (%)</div>
<div class="gv" style="left:493px;top:268px;width:136px;color:#0cf00c">0</div>
<div style="position:absolute;left:647px;top:232px;width:137px;height:95px;border-top:1px solid #a0a0a0;border-left:1px solid #a0a0a0;border-right:1px solid #fff;border-bottom:1px solid #fff;box-shadow:inset 1px 1px 0 #fff"></div>
<div style="position:absolute;left:649px;top:264px;width:132px;height:60px;background:#000"></div>
<div class="gl" style="left:647px;top:232px;width:137px;height:31px;line-height:31px;font-size:26.6px;">A/F (:1)</div>
<div class="gv" style="left:649px;top:268px;width:130px;color:#fa0c0c">0.00</div>
<div style="position:absolute;left:791px;top:232px;width:137px;height:95px;border-top:1px solid #a0a0a0;border-left:1px solid #a0a0a0;border-right:1px solid #fff;border-bottom:1px solid #fff;box-shadow:inset 1px 1px 0 #fff"></div>
<div style="position:absolute;left:793px;top:264px;width:132px;height:60px;background:#000"></div>
<div class="gl" style="left:791px;top:232px;width:137px;height:31px;line-height:31px;font-size:20.5px;">A/F.CMD (:1)</div>
<div class="gv" style="left:793px;top:268px;width:130px;color:#fa0c0c">0.00</div>
<div style="position:absolute;left:941px;top:232px;width:143px;height:95px;border-top:1px solid #a0a0a0;border-left:1px solid #a0a0a0;border-right:1px solid #fff;border-bottom:1px solid #fff;box-shadow:inset 1px 1px 0 #fff"></div>
<div style="position:absolute;left:943px;top:264px;width:138px;height:60px;background:#000"></div>
<div class="gl" style="left:941px;top:232px;width:143px;height:31px;line-height:31px;font-size:24.9px;">S.TRIM (%)</div>
<div class="gv" style="left:943px;top:268px;width:136px;color:#0cf00c">0</div>
<div style="position:absolute;left:1091px;top:232px;width:143px;height:95px;border-top:1px solid #a0a0a0;border-left:1px solid #a0a0a0;border-right:1px solid #fff;border-bottom:1px solid #fff;box-shadow:inset 1px 1px 0 #fff"></div>
<div style="position:absolute;left:1093px;top:264px;width:138px;height:60px;background:#000"></div>
<div class="gl" style="left:1091px;top:232px;width:143px;height:31px;line-height:31px;font-size:25px;">L.TRIM (%)</div>
<div class="gv" style="left:1093px;top:268px;width:136px;color:#0cf00c">0</div>
<div style="position:absolute;left:1241px;top:232px;width:143px;height:95px;border-top:1px solid #a0a0a0;border-left:1px solid #a0a0a0;border-right:1px solid #fff;border-bottom:1px solid #fff;box-shadow:inset 1px 1px 0 #fff"></div>
<div style="position:absolute;left:1243px;top:264px;width:138px;height:60px;background:#000"></div>
<div class="gl" style="left:1241px;top:232px;width:143px;height:31px;line-height:31px;font-size:8.3px;color:#333">Boost Controller Duty Cycle (%)</div>
<div class="gv" style="left:1243px;top:268px;width:136px;color:#0cf00c">0</div>
<div style="position:absolute;left:1391px;top:232px;width:143px;height:95px;border-top:1px solid #a0a0a0;border-left:1px solid #a0a0a0;border-right:1px solid #fff;border-bottom:1px solid #fff;box-shadow:inset 1px 1px 0 #fff"></div>
<div style="position:absolute;left:1393px;top:264px;width:138px;height:60px;background:#000"></div>
<div class="gl" style="left:1391px;top:232px;width:143px;height:31px;line-height:31px;font-size:26.1px;">Gear ()</div>
<div class="gv" style="left:1393px;top:268px;width:136px;color:#fa0c0c">0</div>
<div style="position:absolute;left:1541px;top:232px;width:131px;height:95px;border-top:1px solid #a0a0a0;border-left:1px solid #a0a0a0;border-right:1px solid #fff;border-bottom:1px solid #fff;box-shadow:inset 1px 1px 0 #fff"></div>
<div style="position:absolute;left:1543px;top:264px;width:126px;height:60px;background:#000"></div>
<div class="gl" style="left:1541px;top:232px;width:131px;height:31px;line-height:31px;font-size:24px;">VSS (mph)</div>
<div class="gv" style="left:1543px;top:268px;width:124px;color:#0cf00c">0</div>
<div style="position:absolute;left:1691px;top:232px;width:131px;height:95px;border-top:1px solid #a0a0a0;border-left:1px solid #a0a0a0;border-right:1px solid #fff;border-bottom:1px solid #fff;box-shadow:inset 1px 1px 0 #fff"></div>
<div style="position:absolute;left:1693px;top:264px;width:126px;height:60px;background:#000"></div>
<div class="gl" style="left:1691px;top:232px;width:115px;height:31px;line-height:31px;font-size:17px;">Analog 0 (:1)</div>
<div class="gv" style="left:1693px;top:268px;width:124px;color:#0cf00c">0.00</div>
<svg style="position:absolute;left:818px;top:147px" width="14" height="22" viewBox="0 0 14 22"><path d="M0.5 0.5V17l4-4 3 7.5 2.6-1-3-7.3h5.4z" fill="#fff" stroke="#222" stroke-width="0.8"/></svg>
<div class="mf" style="position:absolute;left:327px;top:364px;width:1491px;height:660px;background:linear-gradient(180deg,#98b4d6 0px,#a9c2e0 20px,#b9d1ea 37px,#c4d7ee 60px,#c4d7ee);border:1px solid #6a7684;box-shadow:inset 1px 1px 0 rgba(255,255,255,.6)"></div>
<svg style="position:absolute;left:338px;top:377px" width="20" height="20" viewBox="0 0 32 32">
<polygon points="31.8,16.0 25.8,17.7 29.6,21.0 24.7,21.0 28.1,26.2 22.4,23.7 23.2,28.6 19.4,25.4 18.7,31.6 16.0,26.0 13.5,30.3 12.6,25.4 8.1,29.7 9.6,23.7 4.9,25.3 7.3,21.0 1.2,21.4 6.2,17.7 1.5,16.0 6.2,14.3 1.2,10.6 7.3,11.0 4.9,6.7 9.6,8.3 8.1,2.3 12.6,6.6 13.5,1.7 16.0,6.0 18.7,0.4 19.4,6.6 23.2,3.4 22.4,8.3 28.1,5.8 24.7,11.0 29.6,11.0 25.8,14.3" fill="#e03010"/>
<polygon points="28.9,17.2 25.2,18.5 27.8,21.5 23.8,21.5 25.2,25.2 21.4,23.8 21.5,27.8 18.4,25.2 17.1,29.0 15.1,25.5 12.6,28.5 12.0,24.6 8.5,26.6 9.3,22.7 5.3,23.4 7.4,20.0 3.4,19.3 6.5,16.8 3.1,14.8 6.8,13.5 4.2,10.5 8.2,10.5 6.8,6.8 10.6,8.2 10.5,4.2 13.6,6.8 14.9,3.0 16.9,6.5 19.4,3.5 20.0,7.4 23.5,5.4 22.7,9.3 26.7,8.6 24.6,12.0 28.6,12.7 25.5,15.2" fill="#f8b828"/>
<path d="M19 9q9 2 9 8t-8 7q4-3 3.5-7T19 9z" fill="#fff020" stroke="#302000" stroke-width=".8"/>
<path transform="translate(15 16) scale(.86) translate(-16 -16)" d="M5 5h12v3h-3v6.5l7.5-6.5h-2V5h9v3h-2.5l-7.5 6.5 8.5 9.5h2v3H16.5v-3h2.5l-6-6.5v6.5h3v3H5v-3h3V8H5z" fill="#1818d0" stroke="#000020" stroke-width="1.8"/>
</svg>
<div style="position:absolute;left:362px;top:379px;white-space:pre;font-size:14px;color:#1e2d45">Table - Fuel high speed</div>
<div class="wbtn" style="left:1685px;top:376px;width:36px;height:21px;background:linear-gradient(#dce6f1,#c8d6e6 45%,#a9bdd5 50%,#bccde1);border-color:#8898ae"></div>
<div style="position:absolute;left:1696px;top:386px;width:13px;height:5px;border:1.5px solid #4a5566;background:#fff;border-radius:1px"></div>
<div class="wbtn" style="left:1726px;top:376px;width:36px;height:21px;background:linear-gradient(#dce6f1,#c8d6e6 45%,#a9bdd5 50%,#bccde1);border-color:#8898ae"></div>
<div style="position:absolute;left:1737px;top:380px;width:13px;height:10px;border:1.5px solid #4a5566;background:#fff;border-radius:1px"></div><div style="position:absolute;left:1741px;top:383px;width:6px;height:4px;border:1.5px solid #4a5566"></div>
<div class="wbtn" style="left:1767px;top:376px;width:36px;height:21px;background:linear-gradient(#eca08e,#dc7a60 45%,#c0381c 50%,#d05030);border-color:#7a3020"></div>
<svg style="position:absolute;left:1777px;top:379px" width="16" height="13" viewBox="0 0 16 13"><path d="M3 2L13 11M13 2L3 11" stroke="#5a3020" stroke-width="4.2" stroke-linecap="round"/><path d="M3 2L13 11M13 2L3 11" stroke="#fff" stroke-width="2.2" stroke-linecap="round"/></svg>
<div style="position:absolute;left:336px;top:401px;width:1466px;height:590px;background:#f0f0f0;border-top:1px solid #8ea4c0"></div>
<div style="position:absolute;left:420px;top:402px;width:28px;height:25px;background:#c4def5"></div>
<svg style="position:absolute;left:341px;top:406px" width="18" height="18" viewBox="0 0 18 18"><path d="M6 1L2 9h3l-2 8 7-10H7l3-6z" fill="#f4f000" stroke="#222" stroke-width=".9"/></svg>
<div style="position:absolute;left:351px;top:410px;white-space:pre;font-size:14px;color:#222">1</div>
<svg style="position:absolute;left:369px;top:406px" width="18" height="18" viewBox="0 0 18 18"><path d="M6 1L2 9h3l-2 8 7-10H7l3-6z" fill="#f4f000" stroke="#222" stroke-width=".9"/></svg>
<div style="position:absolute;left:379px;top:410px;white-space:pre;font-size:14px;color:#222">2</div>
<svg style="position:absolute;left:397px;top:407px" width="14" height="14" viewBox="0 0 14 14"><path d="M2 7l5-5 5 5M2 11l5-5 5 5" fill="none" stroke="#f04858" stroke-width="1.3"/></svg>
<div style="position:absolute;left:407px;top:412px;white-space:pre;font-size:14px;color:#222">1</div>
<svg style="position:absolute;left:423px;top:407px" width="14" height="14" viewBox="0 0 14 14"><path d="M2 7l5-5 5 5M2 11l5-5 5 5" fill="none" stroke="#f04858" stroke-width="1.3"/></svg>
<div style="position:absolute;left:433px;top:412px;white-space:pre;font-size:14px;color:#222">2</div>
<svg style="position:absolute;left:450px;top:406px" width="16" height="16" viewBox="0 0 16 16"><circle cx="6" cy="9" r="5.5" fill="#0a10b8"/><path d="M6 3V0M9 4l5-3" stroke="#222" stroke-width="1.2"/></svg>
<div style="position:absolute;left:462px;top:412px;white-space:pre;font-size:14px;color:#222">1</div>
<svg style="position:absolute;left:478px;top:406px" width="16" height="16" viewBox="0 0 16 16"><circle cx="6" cy="9" r="5.5" fill="#0a10b8"/><path d="M6 3V0M9 4l5-3" stroke="#222" stroke-width="1.2"/></svg>
<div style="position:absolute;left:490px;top:412px;white-space:pre;font-size:14px;color:#222">2</div>
<div style="position:absolute;left:505px;top:406px;width:1px;height:18px;background:#a0a0a0"></div>
<svg style="position:absolute;left:514px;top:406px" width="16" height="16" viewBox="0 0 16 16"><circle cx="6" cy="9" r="5.5" fill="#0a10b8"/><path d="M6 3V0M9 4l5-3" stroke="#222" stroke-width="1.2"/></svg>
<div style="position:absolute;left:526px;top:408px;white-space:pre;font-size:17px;font-weight:bold;color:#111">-</div>
<svg style="position:absolute;left:542px;top:406px" width="16" height="16" viewBox="0 0 16 16"><circle cx="6" cy="9" r="5.5" fill="#0a10b8"/><path d="M6 3V0M9 4l5-3" stroke="#222" stroke-width="1.2"/></svg>
<div style="position:absolute;left:554px;top:408px;white-space:pre;font-size:17px;font-weight:bold;color:#111">+</div>
<div style="position:absolute;left:570px;top:406px;width:1px;height:18px;background:#a0a0a0"></div>
<div style="position:absolute;left:577px;top:407px;width:15px;height:15px;background:#fff;border:1px solid #333"></div>
<div style="position:absolute;left:597px;top:407px;white-space:pre;font-size:14.5px;color:#222;transform:scaleX(.88);transform-origin:0 0">Edit All Tables</div>
<div style="position:absolute;left:684px;top:403px;width:89px;height:24px;background:#e5e5e5;border:1px solid #b4b4b4"></div>
<div style="position:absolute;left:689px;top:407px;white-space:pre;font-size:14.5px;color:#222;transform:scaleX(.87);transform-origin:0 0;width:74px;overflow:hidden">30 degrees</div>
<svg style="position:absolute;left:756px;top:410px" width="11" height="8" viewBox="0 0 11 8"><path d="M1 1.5l4.5 4.5 4.5-4.5" fill="none" stroke="#333" stroke-width="1.3"/></svg>
<div style="position:absolute;left:776px;top:404px;width:1px;height:21px;background:#a0a0a0"></div>
<div style="position:absolute;left:782px;top:402px;width:166px;height:25px;background:#e5e5e5;border:1px solid #b4b4b4"></div>
<div style="position:absolute;left:787px;top:407px;white-space:pre;font-size:14.5px;color:#222;transform:scaleX(.87);transform-origin:0 0">Fuel high speed</div>
<svg style="position:absolute;left:931px;top:410px" width="11" height="8" viewBox="0 0 11 8"><path d="M1 1.5l4.5 4.5 4.5-4.5" fill="none" stroke="#333" stroke-width="1.3"/></svg>
<div style="position:absolute;left:951px;top:404px;width:1px;height:21px;background:#a0a0a0"></div>
<div style="position:absolute;left:962px;top:406px;white-space:pre;font-size:10px;color:#222;font-weight:bold;letter-spacing:-0.3px">Live</div>
<div style="position:absolute;left:1095px;top:401px;width:12px;height:590px;background:#f0f0f0"></div>
<div style="position:absolute;left:1095px;top:401px;width:1px;height:590px;background:#a8a8a8"></div>
<div style="position:absolute;left:1096px;top:401px;width:4px;height:590px;background:#fafafa"></div>
<div style="position:absolute;left:1101px;top:401px;width:1px;height:590px;background:#a8a8a8"></div>
<div style="position:absolute;left:1103px;top:401px;width:1px;height:590px;background:#fff"></div>
<div style="position:absolute;left:1105px;top:401px;width:1px;height:590px;background:#b0b0b0"></div>
<div style="position:absolute;left:1106px;top:402px;width:28px;height:25px;background:#c4def5"></div>
<div style="position:absolute;left:1110px;top:409px;white-space:pre;font-size:15px;color:#222;letter-spacing:-0.5px">2d</div>
<div style="position:absolute;left:1138px;top:409px;white-space:pre;font-size:15px;color:#222;letter-spacing:-0.5px">3d</div>
<div style="position:absolute;left:337px;top:428px;width:713px;height:43px;background:#f0f0f0"></div>
<div class="hc" style="left:337px;top:428px;width:41px;height:21px;padding-top:4px">Col</div>
<div class="hc" style="left:337px;top:449px;width:41px;height:22px;padding-top:5px;text-align:right;padding-right:5px">"</div>
<div class="hc" style="left:377px;top:428px;width:43px;height:21px;padding-top:4px">1</div>
<div class="hc" style="left:377px;top:449px;width:43px;height:22px;padding-top:5px;text-align:right;padding-right:5px">-26.2</div>
<div class="hc" style="left:419px;top:428px;width:43px;height:21px;padding-top:4px">2</div>
<div class="hc" style="left:419px;top:449px;width:43px;height:22px;padding-top:5px;text-align:right;padding-right:5px">-23.6</div>
<div class="hc" style="left:461px;top:428px;width:43px;height:21px;padding-top:4px">3</div>
<div class="hc" style="left:461px;top:449px;width:43px;height:22px;padding-top:5px;text-align:right;padding-right:5px">-21.1</div>
<div class="hc" style="left:503px;top:428px;width:43px;height:21px;padding-top:4px">4</div>
<div class="hc" style="left:503px;top:449px;width:43px;height:22px;padding-top:5px;text-align:right;padding-right:5px">-17.7</div>
<div class="hc" style="left:545px;top:428px;width:43px;height:21px;padding-top:4px">5</div>
<div class="hc" style="left:545px;top:449px;width:43px;height:22px;padding-top:5px;text-align:right;padding-right:5px">-14.3</div>
<div class="hc" style="left:587px;top:428px;width:43px;height:21px;padding-top:4px">6</div>
<div class="hc" style="left:587px;top:449px;width:43px;height:22px;padding-top:5px;text-align:right;padding-right:5px">-10.9</div>
<div class="hc" style="left:629px;top:428px;width:43px;height:21px;padding-top:4px">7</div>
<div class="hc" style="left:629px;top:449px;width:43px;height:22px;padding-top:5px;text-align:right;padding-right:5px">-7.6</div>
<div class="hc" style="left:671px;top:428px;width:43px;height:21px;padding-top:4px">8</div>
<div class="hc" style="left:671px;top:449px;width:43px;height:22px;padding-top:5px;text-align:right;padding-right:5px">-4.1</div>
<div class="hc" style="left:713px;top:428px;width:43px;height:21px;padding-top:4px">9</div>
<div class="hc" style="left:713px;top:449px;width:43px;height:22px;padding-top:5px;text-align:right;padding-right:5px">-0.7</div>
<div class="hc" style="left:755px;top:428px;width:43px;height:21px;padding-top:4px">10</div>
<div class="hc" style="left:755px;top:449px;width:43px;height:22px;padding-top:5px;text-align:right;padding-right:5px">0.5</div>
<div class="hc" style="left:797px;top:428px;width:43px;height:21px;padding-top:4px">11</div>
<div class="hc" style="left:797px;top:449px;width:43px;height:22px;padding-top:5px;text-align:right;padding-right:5px">4.0</div>
<div class="hc" style="left:839px;top:428px;width:43px;height:21px;padding-top:4px">12</div>
<div class="hc" style="left:839px;top:449px;width:43px;height:22px;padding-top:5px;text-align:right;padding-right:5px">7.9</div>
<div class="hc" style="left:881px;top:428px;width:43px;height:21px;padding-top:4px">13</div>
<div class="hc" style="left:881px;top:449px;width:43px;height:22px;padding-top:5px;text-align:right;padding-right:5px">11.9</div>
<div class="hc" style="left:923px;top:428px;width:43px;height:21px;padding-top:4px">14</div>
<div class="hc" style="left:923px;top:449px;width:43px;height:22px;padding-top:5px;text-align:right;padding-right:5px">15.8</div>
<div class="hc" style="left:965px;top:428px;width:43px;height:21px;padding-top:4px">15</div>
<div class="hc" style="left:965px;top:449px;width:43px;height:22px;padding-top:5px;text-align:right;padding-right:5px">21.7</div>
<div class="hc" style="left:1007px;top:428px;width:43px;height:21px;padding-top:4px">16</div>
<div class="hc" style="left:1007px;top:449px;width:43px;height:22px;padding-top:5px;text-align:right;padding-right:5px">27.6</div>
<div class="hc" style="left:337px;top:471px;width:41px;height:22px;padding-top:5px;text-align:right;padding-right:3px">3000</div>
<div class="cell" style="left:378px;top:471px;width:42px;height:21px;background:#0a64d4;color:#d8ecff"><span>7</span></div>
<div class="cell" style="left:420px;top:471px;width:42px;height:21px;background:#6fe6e3;color:#162e2d"><span>185</span></div>
<div class="cell" style="left:462px;top:471px;width:42px;height:21px;background:#75e8c4;color:#172e27"><span>366</span></div>
<div class="cell" style="left:504px;top:471px;width:42px;height:21px;background:#86e8a7;color:#1b2e21"><span>616</span></div>
<div class="cell" style="left:546px;top:471px;width:42px;height:21px;background:#acde90;color:#222c1d"><span>895</span></div>
<div class="cell" style="left:588px;top:471px;width:42px;height:21px;background:#dabc83;color:#2c261a"><span>1185</span></div>
<div class="cell" style="left:630px;top:471px;width:42px;height:21px;background:#f6a072;color:#312017"><span>1497</span></div>
<div class="cell" style="left:672px;top:471px;width:42px;height:21px;background:#f07c78;color:#301918"><span>1814</span></div>
<div class="cell" style="left:714px;top:471px;width:42px;height:21px;background:#f07878;color:#301818"><span>2076</span></div>
<div class="cell" style="left:756px;top:471px;width:42px;height:21px;background:#f07878;color:#301818"><span>2424</span></div>
<div class="cell" style="left:798px;top:471px;width:42px;height:21px;background:#f07878;color:#301818"><span>3139</span></div>
<div class="cell" style="left:840px;top:471px;width:42px;height:21px;background:#f07878;color:#301818"><span>4244</span></div>
<div class="cell" style="left:882px;top:471px;width:42px;height:21px;background:#f07878;color:#301818"><span>5191</span></div>
<div class="cell" style="left:924px;top:471px;width:42px;height:21px;background:#f07878;color:#301818"><span>6160</span></div>
<div class="cell" style="left:966px;top:471px;width:42px;height:21px;background:#f07878;color:#301818"><span>7151</span></div>
<div class="cell" style="left:1008px;top:471px;width:42px;height:21px;background:#f07878;color:#301818"><span>8220</span></div>
<div class="hc" style="left:337px;top:492px;width:41px;height:23px;padding-top:5px;text-align:right;padding-right:3px">3500</div>
<div class="cell" style="left:378px;top:492px;width:42px;height:22px;background:#6ee2f2;color:#162d30"><span>7</span></div>
<div class="cell" style="left:420px;top:492px;width:42px;height:22px;background:#6fe7e2;color:#162e2d"><span>190</span></div>
<div class="cell" style="left:462px;top:492px;width:42px;height:22px;background:#75e8c3;color:#172e27"><span>372</span></div>
<div class="cell" style="left:504px;top:492px;width:42px;height:22px;background:#88e8a5;color:#1b2e21"><span>636</span></div>
<div class="cell" style="left:546px;top:492px;width:42px;height:22px;background:#b0dd8e;color:#232c1c"><span>920</span></div>
<div class="cell" style="left:588px;top:492px;width:42px;height:22px;background:#ddb981;color:#2c251a"><span>1217</span></div>
<div class="cell" style="left:630px;top:492px;width:42px;height:22px;background:#f59b73;color:#311f17"><span>1542</span></div>
<div class="cell" style="left:672px;top:492px;width:42px;height:22px;background:#f07878;color:#301818"><span>1872</span></div>
<div class="cell" style="left:714px;top:492px;width:42px;height:22px;background:#f07878;color:#301818"><span>2161</span></div>
<div class="cell" style="left:756px;top:492px;width:42px;height:22px;background:#f07878;color:#301818"><span>2499</span></div>
<div class="cell" style="left:798px;top:492px;width:42px;height:22px;background:#f07878;color:#301818"><span>3237</span></div>
<div class="cell" style="left:840px;top:492px;width:42px;height:22px;background:#f07878;color:#301818"><span>4373</span></div>
<div class="cell" style="left:882px;top:492px;width:42px;height:22px;background:#f07878;color:#301818"><span>5351</span></div>
<div class="cell" style="left:924px;top:492px;width:42px;height:22px;background:#f07878;color:#301818"><span>6349</span></div>
<div class="cell" style="left:966px;top:492px;width:42px;height:22px;background:#f07878;color:#301818"><span>7371</span></div>
<div class="cell" style="left:1008px;top:492px;width:42px;height:22px;background:#f07878;color:#301818"><span>8473</span></div>
<div class="hc" style="left:337px;top:514px;width:41px;height:23px;padding-top:5px;text-align:right;padding-right:3px">4000</div>
<div class="cell" style="left:378px;top:514px;width:42px;height:22px;background:#6ee2f2;color:#162d30"><span>7</span></div>
<div class="cell" style="left:420px;top:514px;width:42px;height:22px;background:#6fe7e0;color:#162e2d"><span>198</span></div>
<div class="cell" style="left:462px;top:514px;width:42px;height:22px;background:#76e8c1;color:#182e27"><span>391</span></div>
<div class="cell" style="left:504px;top:514px;width:42px;height:22px;background:#8ae8a2;color:#1c2e20"><span>661</span></div>
<div class="cell" style="left:546px;top:514px;width:42px;height:22px;background:#b5db8c;color:#242c1c"><span>956</span></div>
<div class="cell" style="left:588px;top:514px;width:42px;height:22px;background:#e2b47e;color:#2d2419"><span>1267</span></div>
<div class="cell" style="left:630px;top:514px;width:42px;height:22px;background:#f39374;color:#311d17"><span>1605</span></div>
<div class="cell" style="left:672px;top:514px;width:42px;height:22px;background:#f07878;color:#301818"><span>1950</span></div>
<div class="cell" style="left:714px;top:514px;width:42px;height:22px;background:#f07878;color:#301818"><span>2247</span></div>
<div class="cell" style="left:756px;top:514px;width:42px;height:22px;background:#f07878;color:#301818"><span>2601</span></div>
<div class="cell" style="left:798px;top:514px;width:42px;height:22px;background:#f07878;color:#301818"><span>3370</span></div>
<div class="cell" style="left:840px;top:514px;width:42px;height:22px;background:#f07878;color:#301818"><span>4553</span></div>
<div class="cell" style="left:882px;top:514px;width:42px;height:22px;background:#f07878;color:#301818"><span>5568</span></div>
<div class="cell" style="left:924px;top:514px;width:42px;height:22px;background:#f07878;color:#301818"><span>6609</span></div>
<div class="cell" style="left:966px;top:514px;width:42px;height:22px;background:#f07878;color:#301818"><span>7673</span></div>
<div class="cell" style="left:1008px;top:514px;width:42px;height:22px;background:#f07878;color:#301818"><span>8819</span></div>
<div class="hc" style="left:337px;top:536px;width:41px;height:22px;padding-top:5px;text-align:right;padding-right:3px">4500</div>
<div class="cell" style="left:378px;top:536px;width:42px;height:21px;background:#6ee2f2;color:#162d30"><span>7</span></div>
<div class="cell" style="left:420px;top:536px;width:42px;height:21px;background:#6fe7df;color:#162e2d"><span>204</span></div>
<div class="cell" style="left:462px;top:536px;width:42px;height:21px;background:#76e8c0;color:#182e26"><span>396</span></div>
<div class="cell" style="left:504px;top:536px;width:42px;height:21px;background:#8be8a1;color:#1c2e20"><span>671</span></div>
<div class="cell" style="left:546px;top:536px;width:42px;height:21px;background:#b8d98b;color:#252b1c"><span>975</span></div>
<div class="cell" style="left:588px;top:536px;width:42px;height:21px;background:#e4b27d;color:#2e2419"><span>1290</span></div>
<div class="cell" style="left:630px;top:536px;width:42px;height:21px;background:#f29175;color:#301d17"><span>1628</span></div>
<div class="cell" style="left:672px;top:536px;width:42px;height:21px;background:#f07878;color:#301818"><span>1981</span></div>
<div class="cell" style="left:714px;top:536px;width:42px;height:21px;background:#f07878;color:#301818"><span>2286</span></div>
<div class="cell" style="left:756px;top:536px;width:42px;height:21px;background:#f07878;color:#301818"><span>2643</span></div>
<div class="cell" style="left:798px;top:536px;width:42px;height:21px;background:#f07878;color:#301818"><span>3424</span></div>
<div class="cell" style="left:840px;top:536px;width:42px;height:21px;background:#f07878;color:#301818"><span>4630</span></div>
<div class="cell" style="left:882px;top:536px;width:42px;height:21px;background:#f07878;color:#301818"><span>5720</span></div>
<div class="cell" style="left:924px;top:536px;width:42px;height:21px;background:#f07878;color:#301818"><span>6787</span></div>
<div class="cell" style="left:966px;top:536px;width:42px;height:21px;background:#f07878;color:#301818"><span>7880</span></div>
<div class="cell" style="left:1008px;top:536px;width:42px;height:21px;background:#f07878;color:#301818"><span>9059</span></div>
<div class="hc" style="left:337px;top:557px;width:41px;height:23px;padding-top:5px;text-align:right;padding-right:3px">5000</div>
<div class="cell" style="left:378px;top:557px;width:42px;height:22px;background:#6ee2f2;color:#162d30"><span>9</span></div>
<div class="cell" style="left:420px;top:557px;width:42px;height:22px;background:#6fe7df;color:#162e2d"><span>206</span></div>
<div class="cell" style="left:462px;top:557px;width:42px;height:22px;background:#76e8bf;color:#182e26"><span>405</span></div>
<div class="cell" style="left:504px;top:557px;width:42px;height:22px;background:#8de8a0;color:#1c2e20"><span>686</span></div>
<div class="cell" style="left:546px;top:557px;width:42px;height:22px;background:#bbd68a;color:#252b1c"><span>993</span></div>
<div class="cell" style="left:588px;top:557px;width:42px;height:22px;background:#e6b07c;color:#2e2319"><span>1319</span></div>
<div class="cell" style="left:630px;top:557px;width:42px;height:22px;background:#f18c75;color:#301c17"><span>1664</span></div>
<div class="cell" style="left:672px;top:557px;width:42px;height:22px;background:#f07878;color:#301818"><span>2018</span></div>
<div class="cell" style="left:714px;top:557px;width:42px;height:22px;background:#f07878;color:#301818"><span>2333</span></div>
<div class="cell" style="left:756px;top:557px;width:42px;height:22px;background:#f07878;color:#301818"><span>2699</span></div>
<div class="cell" style="left:798px;top:557px;width:42px;height:22px;background:#f07878;color:#301818"><span>3492</span></div>
<div class="cell" style="left:840px;top:557px;width:42px;height:22px;background:#f07878;color:#301818"><span>4723</span></div>
<div class="cell" style="left:882px;top:557px;width:42px;height:22px;background:#f07878;color:#301818"><span>5947</span></div>
<div class="cell" style="left:924px;top:557px;width:42px;height:22px;background:#f07878;color:#301818"><span>7057</span></div>
<div class="cell" style="left:966px;top:557px;width:42px;height:22px;background:#f07878;color:#301818"><span>8193</span></div>
<div class="cell" style="left:1008px;top:557px;width:42px;height:22px;background:#f07878;color:#301818"><span>9419</span></div>
<div class="hc" style="left:337px;top:579px;width:41px;height:22px;padding-top:5px;text-align:right;padding-right:3px">5250</div>
<div class="cell" style="left:378px;top:579px;width:42px;height:21px;background:#6ee2f2;color:#162d30"><span>9</span></div>
<div class="cell" style="left:420px;top:579px;width:42px;height:21px;background:#70e7d9;color:#162e2b"><span>234</span></div>
<div class="cell" style="left:462px;top:579px;width:42px;height:21px;background:#78e8b9;color:#182e25"><span>458</span></div>
<div class="cell" style="left:504px;top:579px;width:42px;height:21px;background:#98e59a;color:#1e2e1f"><span>758</span></div>
<div class="cell" style="left:546px;top:579px;width:42px;height:21px;background:#c6cd88;color:#28291b"><span>1061</span></div>
<div class="cell" style="left:588px;top:579px;width:42px;height:21px;background:#ecaa78;color:#2f2218"><span>1389</span></div>
<div class="cell" style="left:630px;top:579px;width:42px;height:21px;background:#f08876;color:#301b18"><span>1704</span></div>
<div class="cell" style="left:672px;top:579px;width:42px;height:21px;background:#f07878;color:#301818"><span>2083</span></div>
<div class="cell" style="left:714px;top:579px;width:42px;height:21px;background:#f07878;color:#301818"><span>2415</span></div>
<div class="cell" style="left:756px;top:579px;width:42px;height:21px;background:#f07878;color:#301818"><span>2783</span></div>
<div class="cell" style="left:798px;top:579px;width:42px;height:21px;background:#f07878;color:#301818"><span>3601</span></div>
<div class="cell" style="left:840px;top:579px;width:42px;height:21px;background:#f07878;color:#301818"><span>4724</span></div>
<div class="cell" style="left:882px;top:579px;width:42px;height:21px;background:#f07878;color:#301818"><span>6011</span></div>
<div class="cell" style="left:924px;top:579px;width:42px;height:21px;background:#f07878;color:#301818"><span>7204</span></div>
<div class="cell" style="left:966px;top:579px;width:42px;height:21px;background:#f07878;color:#301818"><span>8364</span></div>
<div class="cell" style="left:1008px;top:579px;width:42px;height:21px;background:#f07878;color:#301818"><span>9614</span></div>
<div class="hc" style="left:337px;top:600px;width:41px;height:23px;padding-top:5px;text-align:right;padding-right:3px">5500</div>
<div class="cell" style="left:378px;top:600px;width:42px;height:22px;background:#6ee3f0;color:#162d30"><span>32</span></div>
<div class="cell" style="left:420px;top:600px;width:42px;height:22px;background:#71e7d4;color:#172e2a"><span>262</span></div>
<div class="cell" style="left:462px;top:600px;width:42px;height:22px;background:#7be8b3;color:#192e24"><span>507</span></div>
<div class="cell" style="left:504px;top:600px;width:42px;height:22px;background:#9fe297;color:#202d1e"><span>808</span></div>
<div class="cell" style="left:546px;top:600px;width:42px;height:22px;background:#cec686;color:#29281b"><span>1112</span></div>
<div class="cell" style="left:588px;top:600px;width:42px;height:22px;background:#efa776;color:#302118"><span>1418</span></div>
<div class="cell" style="left:630px;top:600px;width:42px;height:22px;background:#f08676;color:#301b18"><span>1723</span></div>
<div class="cell" style="left:672px;top:600px;width:42px;height:22px;background:#f07878;color:#301818"><span>2110</span></div>
<div class="cell" style="left:714px;top:600px;width:42px;height:22px;background:#f07878;color:#301818"><span>2458</span></div>
<div class="cell" style="left:756px;top:600px;width:42px;height:22px;background:#f07878;color:#301818"><span>2802</span></div>
<div class="cell" style="left:798px;top:600px;width:42px;height:22px;background:#f07878;color:#301818"><span>3627</span></div>
<div class="cell" style="left:840px;top:600px;width:42px;height:22px;background:#f07878;color:#301818"><span>4762</span></div>
<div class="cell" style="left:882px;top:600px;width:42px;height:22px;background:#f07878;color:#301818"><span>6057</span></div>
<div class="cell" style="left:924px;top:600px;width:42px;height:22px;background:#f07878;color:#301818"><span>7259</span></div>
<div class="cell" style="left:966px;top:600px;width:42px;height:22px;background:#f07878;color:#301818"><span>8428</span></div>
<div class="cell" style="left:1008px;top:600px;width:42px;height:22px;background:#f07878;color:#301818"><span>9688</span></div>
<div class="hc" style="left:337px;top:622px;width:41px;height:23px;padding-top:5px;text-align:right;padding-right:3px">5750</div>
<div class="cell" style="left:378px;top:622px;width:42px;height:22px;background:#6ee3f0;color:#162d30"><span>44</span></div>
<div class="cell" style="left:420px;top:622px;width:42px;height:22px;background:#71e8d2;color:#172e2a"><span>271</span></div>
<div class="cell" style="left:462px;top:622px;width:42px;height:22px;background:#7be8b3;color:#192e24"><span>507</span></div>
<div class="cell" style="left:504px;top:622px;width:42px;height:22px;background:#9ee297;color:#202d1e"><span>804</span></div>
<div class="cell" style="left:546px;top:622px;width:42px;height:22px;background:#cfc585;color:#29271b"><span>1116</span></div>
<div class="cell" style="left:588px;top:622px;width:42px;height:22px;background:#efa777;color:#302118"><span>1414</span></div>
<div class="cell" style="left:630px;top:622px;width:42px;height:22px;background:#f08776;color:#301b18"><span>1712</span></div>
<div class="cell" style="left:672px;top:622px;width:42px;height:22px;background:#f07878;color:#301818"><span>2097</span></div>
<div class="cell" style="left:714px;top:622px;width:42px;height:22px;background:#f07878;color:#301818"><span>2424</span></div>
<div class="cell" style="left:756px;top:622px;width:42px;height:22px;background:#f07878;color:#301818"><span>2783</span></div>
<div class="cell" style="left:798px;top:622px;width:42px;height:22px;background:#f07878;color:#301818"><span>3604</span></div>
<div class="cell" style="left:840px;top:622px;width:42px;height:22px;background:#f07878;color:#301818"><span>4775</span></div>
<div class="cell" style="left:882px;top:622px;width:42px;height:22px;background:#f07878;color:#301818"><span>6078</span></div>
<div class="cell" style="left:924px;top:622px;width:42px;height:22px;background:#f07878;color:#301818"><span>7284</span></div>
<div class="cell" style="left:966px;top:622px;width:42px;height:22px;background:#f07878;color:#301818"><span>8457</span></div>
<div class="cell" style="left:1008px;top:622px;width:42px;height:22px;background:#f07878;color:#301818"><span>9722</span></div>
<div class="hc" style="left:337px;top:644px;width:41px;height:22px;padding-top:5px;text-align:right;padding-right:3px">6000</div>
<div class="cell" style="left:378px;top:644px;width:42px;height:21px;background:#6ee4ed;color:#162e2f"><span>86</span></div>
<div class="cell" style="left:420px;top:644px;width:42px;height:21px;background:#73e8ca;color:#172e28"><span>314</span></div>
<div class="cell" style="left:462px;top:644px;width:42px;height:21px;background:#80e8ae;color:#1a2e23"><span>556</span></div>
<div class="cell" style="left:504px;top:644px;width:42px;height:21px;background:#a7e093;color:#212d1d"><span>860</span></div>
<div class="cell" style="left:546px;top:644px;width:42px;height:21px;background:#d4c184;color:#2a271a"><span>1151</span></div>
<div class="cell" style="left:588px;top:644px;width:42px;height:21px;background:#f2a475;color:#302117"><span>1450</span></div>
<div class="cell" style="left:630px;top:644px;width:42px;height:21px;background:#f08177;color:#301a18"><span>1769</span></div>
<div class="cell" style="left:672px;top:644px;width:42px;height:21px;background:#f07878;color:#301818"><span>2144</span></div>
<div class="cell" style="left:714px;top:644px;width:42px;height:21px;background:#f07878;color:#301818"><span>2467</span></div>
<div class="cell" style="left:756px;top:644px;width:42px;height:21px;background:#f07878;color:#301818"><span>2841</span></div>
<div class="cell" style="left:798px;top:644px;width:42px;height:21px;background:#f07878;color:#301818"><span>3604</span></div>
<div class="cell" style="left:840px;top:644px;width:42px;height:21px;background:#f07878;color:#301818"><span>4728</span></div>
<div class="cell" style="left:882px;top:644px;width:42px;height:21px;background:#f07878;color:#301818"><span>5959</span></div>
<div class="cell" style="left:924px;top:644px;width:42px;height:21px;background:#f07878;color:#301818"><span>7142</span></div>
<div class="cell" style="left:966px;top:644px;width:42px;height:21px;background:#f07878;color:#301818"><span>8291</span></div>
<div class="cell" style="left:1008px;top:644px;width:42px;height:21px;background:#f07878;color:#301818"><span>9531</span></div>
<div class="hc" style="left:337px;top:665px;width:41px;height:23px;padding-top:5px;text-align:right;padding-right:3px">6250</div>
<div class="cell" style="left:378px;top:665px;width:42px;height:22px;background:#6ee5ec;color:#162e2f"><span>120</span></div>
<div class="cell" style="left:420px;top:665px;width:42px;height:22px;background:#73e8c8;color:#172e28"><span>335</span></div>
<div class="cell" style="left:462px;top:665px;width:42px;height:22px;background:#7ee8b0;color:#192e23"><span>538</span></div>
<div class="cell" style="left:504px;top:665px;width:42px;height:22px;background:#a2e295;color:#202d1e"><span>826</span></div>
<div class="cell" style="left:546px;top:665px;width:42px;height:22px;background:#d0c485;color:#2a271b"><span>1126</span></div>
<div class="cell" style="left:588px;top:665px;width:42px;height:22px;background:#eda977;color:#2f2218"><span>1400</span></div>
<div class="cell" style="left:630px;top:665px;width:42px;height:22px;background:#f08a76;color:#301c18"><span>1685</span></div>
<div class="cell" style="left:672px;top:665px;width:42px;height:22px;background:#f07878;color:#301818"><span>2071</span></div>
<div class="cell" style="left:714px;top:665px;width:42px;height:22px;background:#f07878;color:#301818"><span>2386</span></div>
<div class="cell" style="left:756px;top:665px;width:42px;height:22px;background:#f07878;color:#301818"><span>2743</span></div>
<div class="cell" style="left:798px;top:665px;width:42px;height:22px;background:#f07878;color:#301818"><span>3552</span></div>
<div class="cell" style="left:840px;top:665px;width:42px;height:22px;background:#f07878;color:#301818"><span>4752</span></div>
<div class="cell" style="left:882px;top:665px;width:42px;height:22px;background:#f07878;color:#301818"><span>5932</span></div>
<div class="cell" style="left:924px;top:665px;width:42px;height:22px;background:#f07878;color:#301818"><span>7109</span></div>
<div class="cell" style="left:966px;top:665px;width:42px;height:22px;background:#f07878;color:#301818"><span>8254</span></div>
<div class="cell" style="left:1008px;top:665px;width:42px;height:22px;background:#f07878;color:#301818"><span>9488</span></div>
<div class="hc" style="left:337px;top:687px;width:41px;height:22px;padding-top:5px;text-align:right;padding-right:3px">6500</div>
<div class="cell" style="left:378px;top:687px;width:42px;height:21px;background:#6ee5eb;color:#162e2f"><span>128</span></div>
<div class="cell" style="left:420px;top:687px;width:42px;height:21px;background:#74e8c7;color:#172e28"><span>343</span></div>
<div class="cell" style="left:462px;top:687px;width:42px;height:21px;background:#7fe8ae;color:#192e23"><span>554</span></div>
<div class="cell" style="left:504px;top:687px;width:42px;height:21px;background:#a4e194;color:#212d1e"><span>844</span></div>
<div class="cell" style="left:546px;top:687px;width:42px;height:21px;background:#d0c485;color:#2a271b"><span>1125</span></div>
<div class="cell" style="left:588px;top:687px;width:42px;height:21px;background:#efa777;color:#302118"><span>1414</span></div>
<div class="cell" style="left:630px;top:687px;width:42px;height:21px;background:#f08776;color:#301b18"><span>1707</span></div>
<div class="cell" style="left:672px;top:687px;width:42px;height:21px;background:#f07878;color:#301818"><span>2069</span></div>
<div class="cell" style="left:714px;top:687px;width:42px;height:21px;background:#f07878;color:#301818"><span>2354</span></div>
<div class="cell" style="left:756px;top:687px;width:42px;height:21px;background:#f07878;color:#301818"><span>2728</span></div>
<div class="cell" style="left:798px;top:687px;width:42px;height:21px;background:#f07878;color:#301818"><span>3532</span></div>
<div class="cell" style="left:840px;top:687px;width:42px;height:21px;background:#f07878;color:#301818"><span>4777</span></div>
<div class="cell" style="left:882px;top:687px;width:42px;height:21px;background:#f07878;color:#301818"><span>5961</span></div>
<div class="cell" style="left:924px;top:687px;width:42px;height:21px;background:#f07878;color:#301818"><span>7144</span></div>
<div class="cell" style="left:966px;top:687px;width:42px;height:21px;background:#f07878;color:#301818"><span>8294</span></div>
<div class="cell" style="left:1008px;top:687px;width:42px;height:21px;background:#f07878;color:#301818"><span>9534</span></div>
<div class="hc" style="left:337px;top:708px;width:41px;height:23px;padding-top:5px;text-align:right;padding-right:3px">6750</div>
<div class="cell" style="left:378px;top:708px;width:42px;height:22px;background:#6ee6eb;color:#162e2f"><span>135</span></div>
<div class="cell" style="left:420px;top:708px;width:42px;height:22px;background:#73e8c9;color:#172e28"><span>325</span></div>
<div class="cell" style="left:462px;top:708px;width:42px;height:22px;background:#7ce8b2;color:#192e24"><span>521</span></div>
<div class="cell" style="left:504px;top:708px;width:42px;height:22px;background:#9fe297;color:#202d1e"><span>807</span></div>
<div class="cell" style="left:546px;top:708px;width:42px;height:22px;background:#cdc786;color:#29281b"><span>1107</span></div>
<div class="cell" style="left:588px;top:708px;width:42px;height:22px;background:#eda977;color:#2f2218"><span>1400</span></div>
<div class="cell" style="left:630px;top:708px;width:42px;height:22px;background:#f18b76;color:#301c18"><span>1679</span></div>
<div class="cell" style="left:672px;top:708px;width:42px;height:22px;background:#f07878;color:#301818"><span>2043</span></div>
<div class="cell" style="left:714px;top:708px;width:42px;height:22px;background:#f07878;color:#301818"><span>2327</span></div>
<div class="cell" style="left:756px;top:708px;width:42px;height:22px;background:#f07878;color:#301818"><span>2721</span></div>
<div class="cell" style="left:798px;top:708px;width:42px;height:22px;background:#f07878;color:#301818"><span>3524</span></div>
<div class="cell" style="left:840px;top:708px;width:42px;height:22px;background:#f07878;color:#301818"><span>4858</span></div>
<div class="cell" style="left:882px;top:708px;width:42px;height:22px;background:#f07878;color:#301818"><span>6003</span></div>
<div class="cell" style="left:924px;top:708px;width:42px;height:22px;background:#f07878;color:#301818"><span>7195</span></div>
<div class="cell" style="left:966px;top:708px;width:42px;height:22px;background:#f07878;color:#301818"><span>8353</span></div>
<div class="cell" style="left:1008px;top:708px;width:42px;height:22px;background:#f07878;color:#301818"><span>9602</span></div>
<div class="hc" style="left:337px;top:730px;width:41px;height:23px;padding-top:5px;text-align:right;padding-right:3px">7000</div>
<div class="cell" style="left:378px;top:730px;width:42px;height:22px;background:#6ee5eb;color:#162e2f"><span>129</span></div>
<div class="cell" style="left:420px;top:730px;width:42px;height:22px;background:#73e8c8;color:#172e28"><span>331</span></div>
<div class="cell" style="left:462px;top:730px;width:42px;height:22px;background:#7ce8b2;color:#192e24"><span>520</span></div>
<div class="cell" style="left:504px;top:730px;width:42px;height:22px;background:#9fe296;color:#202d1e"><span>811</span></div>
<div class="cell" style="left:546px;top:730px;width:42px;height:22px;background:#c8cb87;color:#28291b"><span>1078</span></div>
<div class="cell" style="left:588px;top:730px;width:42px;height:22px;background:#ebab79;color:#2f2218"><span>1369</span></div>
<div class="cell" style="left:630px;top:730px;width:42px;height:22px;background:#f18d75;color:#301c17"><span>1662</span></div>
<div class="cell" style="left:672px;top:730px;width:42px;height:22px;background:#f07878;color:#301818"><span>2002</span></div>
<div class="cell" style="left:714px;top:730px;width:42px;height:22px;background:#f07878;color:#301818"><span>2300</span></div>
<div class="cell" style="left:756px;top:730px;width:42px;height:22px;background:#f07878;color:#301818"><span>2681</span></div>
<div class="cell" style="left:798px;top:730px;width:42px;height:22px;background:#f07878;color:#301818"><span>3472</span></div>
<div class="cell" style="left:840px;top:730px;width:42px;height:22px;background:#f07878;color:#301818"><span>4837</span></div>
<div class="cell" style="left:882px;top:730px;width:42px;height:22px;background:#f07878;color:#301818"><span>6039</span></div>
<div class="cell" style="left:924px;top:730px;width:42px;height:22px;background:#f07878;color:#301818"><span>7238</span></div>
<div class="cell" style="left:966px;top:730px;width:42px;height:22px;background:#f07878;color:#301818"><span>8401</span></div>
<div class="cell" style="left:1008px;top:730px;width:42px;height:22px;background:#f07878;color:#301818"><span>9658</span></div>
<div class="hc" style="left:337px;top:752px;width:41px;height:22px;padding-top:5px;text-align:right;padding-right:3px">7400</div>
<div class="cell" style="left:378px;top:752px;width:42px;height:21px;background:#6ee5ec;color:#162e2f"><span>107</span></div>
<div class="cell" style="left:420px;top:752px;width:42px;height:21px;background:#72e8cb;color:#172e29"><span>308</span></div>
<div class="cell" style="left:462px;top:752px;width:42px;height:21px;background:#7be8b3;color:#192e24"><span>510</span></div>
<div class="cell" style="left:504px;top:752px;width:42px;height:21px;background:#9fe297;color:#202d1e"><span>805</span></div>
<div class="cell" style="left:546px;top:752px;width:42px;height:21px;background:#caca87;color:#28281b"><span>1086</span></div>
<div class="cell" style="left:588px;top:752px;width:42px;height:21px;background:#eda978;color:#2f2218"><span>1393</span></div>
<div class="cell" style="left:630px;top:752px;width:42px;height:21px;background:#f18b76;color:#301c18"><span>1675</span></div>
<div class="cell" style="left:672px;top:752px;width:42px;height:21px;background:#f07878;color:#301818"><span>2046</span></div>
<div class="cell" style="left:714px;top:752px;width:42px;height:21px;background:#f07878;color:#301818"><span>2350</span></div>
<div class="cell" style="left:756px;top:752px;width:42px;height:21px;background:#f07878;color:#301818"><span>2690</span></div>
<div class="cell" style="left:798px;top:752px;width:42px;height:21px;background:#f07878;color:#301818"><span>3484</span></div>
<div class="cell" style="left:840px;top:752px;width:42px;height:21px;background:#f07878;color:#301818"><span>4855</span></div>
<div class="cell" style="left:882px;top:752px;width:42px;height:21px;background:#f07878;color:#301818"><span>6120</span></div>
<div class="cell" style="left:924px;top:752px;width:42px;height:21px;background:#f07878;color:#301818"><span>7334</span></div>
<div class="cell" style="left:966px;top:752px;width:42px;height:21px;background:#f07878;color:#301818"><span>8514</span></div>
<div class="cell" style="left:1008px;top:752px;width:42px;height:21px;background:#f07878;color:#301818"><span>9786</span></div>
<div class="hc" style="left:337px;top:773px;width:41px;height:23px;padding-top:5px;text-align:right;padding-right:3px">7700</div>
<div class="cell" style="left:378px;top:773px;width:42px;height:22px;background:#6ee4ed;color:#162e2f"><span>91</span></div>
<div class="cell" style="left:420px;top:773px;width:42px;height:22px;background:#72e8cd;color:#172e29"><span>294</span></div>
<div class="cell" style="left:462px;top:773px;width:42px;height:22px;background:#7ae8b5;color:#182e24"><span>490</span></div>
<div class="cell" style="left:504px;top:773px;width:42px;height:22px;background:#9be398;color:#1f2d1e"><span>782</span></div>
<div class="cell" style="left:546px;top:773px;width:42px;height:22px;background:#c7cc87;color:#28291b"><span>1071</span></div>
<div class="cell" style="left:588px;top:773px;width:42px;height:22px;background:#ecaa78;color:#2f2218"><span>1380</span></div>
<div class="cell" style="left:630px;top:773px;width:42px;height:22px;background:#f18d75;color:#301c17"><span>1655</span></div>
<div class="cell" style="left:672px;top:773px;width:42px;height:22px;background:#f07878;color:#301818"><span>2021</span></div>
<div class="cell" style="left:714px;top:773px;width:42px;height:22px;background:#f07878;color:#301818"><span>2313</span></div>
<div class="cell" style="left:756px;top:773px;width:42px;height:22px;background:#f07878;color:#301818"><span>2660</span></div>
<div class="cell" style="left:798px;top:773px;width:42px;height:22px;background:#f07878;color:#301818"><span>3445</span></div>
<div class="cell" style="left:840px;top:773px;width:42px;height:22px;background:#f07878;color:#301818"><span>4799</span></div>
<div class="cell" style="left:882px;top:773px;width:42px;height:22px;background:#f07878;color:#301818"><span>6113</span></div>
<div class="cell" style="left:924px;top:773px;width:42px;height:22px;background:#f07878;color:#301818"><span>7325</span></div>
<div class="cell" style="left:966px;top:773px;width:42px;height:22px;background:#f07878;color:#301818"><span>8505</span></div>
<div class="cell" style="left:1008px;top:773px;width:42px;height:22px;background:#f07878;color:#301818"><span>9777</span></div>
<div class="hc" style="left:337px;top:795px;width:41px;height:22px;padding-top:5px;text-align:right;padding-right:3px">8000</div>
<div class="cell" style="left:378px;top:795px;width:42px;height:21px;background:#6ee4ee;color:#162e30"><span>68</span></div>
<div class="cell" style="left:420px;top:795px;width:42px;height:21px;background:#71e8d0;color:#172e2a"><span>279</span></div>
<div class="cell" style="left:462px;top:795px;width:42px;height:21px;background:#79e8b7;color:#182e25"><span>474</span></div>
<div class="cell" style="left:504px;top:795px;width:42px;height:21px;background:#98e59a;color:#1e2e1f"><span>758</span></div>
<div class="cell" style="left:546px;top:795px;width:42px;height:21px;background:#c4ce88;color:#27291b"><span>1053</span></div>
<div class="cell" style="left:588px;top:795px;width:42px;height:21px;background:#e9ad7a;color:#2f2318"><span>1353</span></div>
<div class="cell" style="left:630px;top:795px;width:42px;height:21px;background:#f28f75;color:#301d17"><span>1641</span></div>
<div class="cell" style="left:672px;top:795px;width:42px;height:21px;background:#f07878;color:#301818"><span>2000</span></div>
<div class="cell" style="left:714px;top:795px;width:42px;height:21px;background:#f07878;color:#301818"><span>2303</span></div>
<div class="cell" style="left:756px;top:795px;width:42px;height:21px;background:#f07878;color:#301818"><span>2656</span></div>
<div class="cell" style="left:798px;top:795px;width:42px;height:21px;background:#f07878;color:#301818"><span>3440</span></div>
<div class="cell" style="left:840px;top:795px;width:42px;height:21px;background:#f07878;color:#301818"><span>4839</span></div>
<div class="cell" style="left:882px;top:795px;width:42px;height:21px;background:#f07878;color:#301818"><span>6101</span></div>
<div class="cell" style="left:924px;top:795px;width:42px;height:21px;background:#f07878;color:#301818"><span>7312</span></div>
<div class="cell" style="left:966px;top:795px;width:42px;height:21px;background:#f07878;color:#301818"><span>8488</span></div>
<div class="cell" style="left:1008px;top:795px;width:42px;height:21px;background:#f07878;color:#301818"><span>9758</span></div>
<div class="hc" style="left:337px;top:816px;width:41px;height:23px;padding-top:5px;text-align:right;padding-right:3px">8200</div>
<div class="cell" style="left:378px;top:816px;width:42px;height:22px;background:#6ee3ef;color:#162d30"><span>52</span></div>
<div class="cell" style="left:420px;top:816px;width:42px;height:22px;background:#70e7d7;color:#162e2b"><span>243</span></div>
<div class="cell" style="left:462px;top:816px;width:42px;height:22px;background:#77e8bd;color:#182e26"><span>424</span></div>
<div class="cell" style="left:504px;top:816px;width:42px;height:22px;background:#8fe79f;color:#1d2e20"><span>697</span></div>
<div class="cell" style="left:546px;top:816px;width:42px;height:22px;background:#c0d289;color:#262a1b"><span>1024</span></div>
<div class="cell" style="left:588px;top:816px;width:42px;height:22px;background:#e7af7b;color:#2e2319"><span>1331</span></div>
<div class="cell" style="left:630px;top:816px;width:42px;height:22px;background:#f29075;color:#301d17"><span>1630</span></div>
<div class="cell" style="left:672px;top:816px;width:42px;height:22px;background:#f07878;color:#301818"><span>1983</span></div>
<div class="cell" style="left:714px;top:816px;width:42px;height:22px;background:#f07878;color:#301818"><span>2282</span></div>
<div class="cell" style="left:756px;top:816px;width:42px;height:22px;background:#f07878;color:#301818"><span>2630</span></div>
<div class="cell" style="left:798px;top:816px;width:42px;height:22px;background:#f07878;color:#301818"><span>3406</span></div>
<div class="cell" style="left:840px;top:816px;width:42px;height:22px;background:#f07878;color:#301818"><span>4844</span></div>
<div class="cell" style="left:882px;top:816px;width:42px;height:22px;background:#f07878;color:#301818"><span>6105</span></div>
<div class="cell" style="left:924px;top:816px;width:42px;height:22px;background:#f07878;color:#301818"><span>7316</span></div>
<div class="cell" style="left:966px;top:816px;width:42px;height:22px;background:#f07878;color:#301818"><span>8495</span></div>
<div class="cell" style="left:1008px;top:816px;width:42px;height:22px;background:#f07878;color:#301818"><span>9764</span></div>
<div class="hc" style="left:337px;top:838px;width:41px;height:23px;padding-top:5px;text-align:right;padding-right:3px">8400</div>
<div class="cell" style="left:378px;top:838px;width:42px;height:22px;background:#6ee4ef;color:#162e30"><span>57</span></div>
<div class="cell" style="left:420px;top:838px;width:42px;height:22px;background:#71e7d5;color:#172e2b"><span>254</span></div>
<div class="cell" style="left:462px;top:838px;width:42px;height:22px;background:#78e8ba;color:#182e25"><span>447</span></div>
<div class="cell" style="left:504px;top:838px;width:42px;height:22px;background:#94e69c;color:#1e2e1f"><span>734</span></div>
<div class="cell" style="left:546px;top:838px;width:42px;height:22px;background:#c0d289;color:#262a1b"><span>1023</span></div>
<div class="cell" style="left:588px;top:838px;width:42px;height:22px;background:#e7af7b;color:#2e2319"><span>1331</span></div>
<div class="cell" style="left:630px;top:838px;width:42px;height:22px;background:#f29075;color:#301d17"><span>1632</span></div>
<div class="cell" style="left:672px;top:838px;width:42px;height:22px;background:#f07878;color:#301818"><span>1984</span></div>
<div class="cell" style="left:714px;top:838px;width:42px;height:22px;background:#f07878;color:#301818"><span>2282</span></div>
<div class="cell" style="left:756px;top:838px;width:42px;height:22px;background:#f07878;color:#301818"><span>2629</span></div>
<div class="cell" style="left:798px;top:838px;width:42px;height:22px;background:#f07878;color:#301818"><span>3406</span></div>
<div class="cell" style="left:840px;top:838px;width:42px;height:22px;background:#f07878;color:#301818"><span>4842</span></div>
<div class="cell" style="left:882px;top:838px;width:42px;height:22px;background:#f07878;color:#301818"><span>6043</span></div>
<div class="cell" style="left:924px;top:838px;width:42px;height:22px;background:#f07878;color:#301818"><span>7241</span></div>
<div class="cell" style="left:966px;top:838px;width:42px;height:22px;background:#f07878;color:#301818"><span>8407</span></div>
<div class="cell" style="left:1008px;top:838px;width:42px;height:22px;background:#f07878;color:#301818"><span>9665</span></div>
<div class="hc" style="left:337px;top:860px;width:41px;height:22px;padding-top:5px;text-align:right;padding-right:3px">8700</div>
<div class="cell" style="left:378px;top:860px;width:42px;height:21px;background:#6ee3ef;color:#162d30"><span>55</span></div>
<div class="cell" style="left:420px;top:860px;width:42px;height:21px;background:#71e7d6;color:#172e2b"><span>248</span></div>
<div class="cell" style="left:462px;top:860px;width:42px;height:21px;background:#77e8bc;color:#182e26"><span>437</span></div>
<div class="cell" style="left:504px;top:860px;width:42px;height:21px;background:#92e69d;color:#1d2e1f"><span>719</span></div>
<div class="cell" style="left:546px;top:860px;width:42px;height:21px;background:#bcd58a;color:#262b1c"><span>1002</span></div>
<div class="cell" style="left:588px;top:860px;width:42px;height:21px;background:#e5b17d;color:#2e2319"><span>1301</span></div>
<div class="cell" style="left:630px;top:860px;width:42px;height:21px;background:#f39474;color:#311e17"><span>1600</span></div>
<div class="cell" style="left:672px;top:860px;width:42px;height:21px;background:#f07878;color:#301818"><span>1944</span></div>
<div class="cell" style="left:714px;top:860px;width:42px;height:21px;background:#f07878;color:#301818"><span>2235</span></div>
<div class="cell" style="left:756px;top:860px;width:42px;height:21px;background:#f07878;color:#301818"><span>2577</span></div>
<div class="cell" style="left:798px;top:860px;width:42px;height:21px;background:#f07878;color:#301818"><span>3337</span></div>
<div class="cell" style="left:840px;top:860px;width:42px;height:21px;background:#f07878;color:#301818"><span>4746</span></div>
<div class="cell" style="left:882px;top:860px;width:42px;height:21px;background:#f07878;color:#301818"><span>5923</span></div>
<div class="cell" style="left:924px;top:860px;width:42px;height:21px;background:#f07878;color:#301818"><span>7099</span></div>
<div class="cell" style="left:966px;top:860px;width:42px;height:21px;background:#f07878;color:#301818"><span>8241</span></div>
<div class="cell" style="left:1008px;top:860px;width:42px;height:21px;background:#f07878;color:#301818"><span>9473</span></div>
<div class="hc" style="left:337px;top:881px;width:41px;height:23px;padding-top:5px;text-align:right;padding-right:3px">9000</div>
<div class="cell" style="left:378px;top:881px;width:42px;height:22px;background:#6ee3ef;color:#162d30"><span>54</span></div>
<div class="cell" style="left:420px;top:881px;width:42px;height:22px;background:#71e7d7;color:#172e2b"><span>244</span></div>
<div class="cell" style="left:462px;top:881px;width:42px;height:22px;background:#77e8bd;color:#182e26"><span>424</span></div>
<div class="cell" style="left:504px;top:881px;width:42px;height:22px;background:#8fe79f;color:#1d2e20"><span>699</span></div>
<div class="cell" style="left:546px;top:881px;width:42px;height:22px;background:#b8d98b;color:#252b1c"><span>974</span></div>
<div class="cell" style="left:588px;top:881px;width:42px;height:22px;background:#e2b47f;color:#2d2419"><span>1264</span></div>
<div class="cell" style="left:630px;top:881px;width:42px;height:22px;background:#f49a73;color:#311f17"><span>1550</span></div>
<div class="cell" style="left:672px;top:881px;width:42px;height:22px;background:#f07878;color:#301818"><span>1885</span></div>
<div class="cell" style="left:714px;top:881px;width:42px;height:22px;background:#f07878;color:#301818"><span>2170</span></div>
<div class="cell" style="left:756px;top:881px;width:42px;height:22px;background:#f07878;color:#301818"><span>2500</span></div>
<div class="cell" style="left:798px;top:881px;width:42px;height:22px;background:#f07878;color:#301818"><span>3239</span></div>
<div class="cell" style="left:840px;top:881px;width:42px;height:22px;background:#f07878;color:#301818"><span>4600</span></div>
<div class="cell" style="left:882px;top:881px;width:42px;height:22px;background:#f07878;color:#301818"><span>5744</span></div>
<div class="cell" style="left:924px;top:881px;width:42px;height:22px;background:#f07878;color:#301818"><span>6885</span></div>
<div class="cell" style="left:966px;top:881px;width:42px;height:22px;background:#f07878;color:#301818"><span>7993</span></div>
<div class="cell" style="left:1008px;top:881px;width:42px;height:22px;background:#f07878;color:#301818"><span>9188</span></div>
<svg style="position:absolute;left:1142px;top:447px" width="659" height="537" viewBox="1142 447 659 537"><rect x="1150" y="452" width="642" height="552" fill="#fff"/><path d="M1150 951.5H1792" stroke="#3a3a3a" stroke-width="1.6"/><path d="M1150 897.5H1792" stroke="#3a3a3a" stroke-width="1.6"/><path d="M1150 844.5H1792" stroke="#3a3a3a" stroke-width="1.6"/><path d="M1150 790.5H1792" stroke="#3a3a3a" stroke-width="1.6"/><path d="M1150 736.5H1792" stroke="#3a3a3a" stroke-width="1.6"/><path d="M1150 682.5H1792" stroke="#3a3a3a" stroke-width="1.6"/><path d="M1150 628.5H1792" stroke="#3a3a3a" stroke-width="1.6"/><path d="M1150 574.5H1792" stroke="#3a3a3a" stroke-width="1.6"/><path d="M1150 520.5H1792" stroke="#3a3a3a" stroke-width="1.6"/><path d="M1150 467.5H1792" stroke="#3a3a3a" stroke-width="1.6"/><path d="M1150.5 452V984" stroke="#3a3a3a" stroke-width="1.6"/><path d="M1257.5 452V984" stroke="#3a3a3a" stroke-width="1.6"/><path d="M1364.5 452V984" stroke="#3a3a3a" stroke-width="1.6"/><path d="M1470.5 452V984" stroke="#3a3a3a" stroke-width="1.6"/><path d="M1577.5 452V984" stroke="#3a3a3a" stroke-width="1.6"/><path d="M1684.5 452V984" stroke="#3a3a3a" stroke-width="1.6"/><path d="M1791.5 452V984" stroke="#3a3a3a" stroke-width="1.6"/><path d="M1150 452.5H1792" stroke="#3a3a3a" stroke-width="1.6"/><path d="M1791.5 452V984" stroke="#111" stroke-width="2.2"/><path d="M1150.2 1004.7 L1203.7 1004.7 L1257.1 1004.7 L1310.5 1004.7 L1364.0 1004.6 L1390.7 1004.6 L1417.5 1003.4 L1444.2 1002.7 L1470.9 1000.5 L1497.6 998.6 L1524.3 998.2 L1551.1 997.8 L1577.8 998.2 L1620.6 999.3 L1652.6 1000.2 L1684.7 1001.4 L1706.1 1002.3 L1727.5 1002.0 L1759.5 1002.1 L1791.6 1002.2" fill="none" stroke="#101090" stroke-width="1.1"/><rect x="1146.7" y="1001.2" width="7" height="7" fill="#101090"/><rect x="1149.2" y="1003.7" width="2" height="2" fill="#fff" opacity=".7"/><rect x="1200.2" y="1001.2" width="7" height="7" fill="#101090"/><rect x="1202.7" y="1003.7" width="2" height="2" fill="#fff" opacity=".7"/><rect x="1253.6" y="1001.2" width="7" height="7" fill="#101090"/><rect x="1256.1" y="1003.7" width="2" height="2" fill="#fff" opacity=".7"/><rect x="1307.0" y="1001.2" width="7" height="7" fill="#101090"/><rect x="1309.5" y="1003.7" width="2" height="2" fill="#fff" opacity=".7"/><rect x="1360.5" y="1001.1" width="7" height="7" fill="#101090"/><rect x="1363.0" y="1003.6" width="2" height="2" fill="#fff" opacity=".7"/><rect x="1387.2" y="1001.1" width="7" height="7" fill="#101090"/><rect x="1389.7" y="1003.6" width="2" height="2" fill="#fff" opacity=".7"/><rect x="1414.0" y="999.9" width="7" height="7" fill="#101090"/><rect x="1416.5" y="1002.4" width="2" height="2" fill="#fff" opacity=".7"/><rect x="1440.7" y="999.2" width="7" height="7" fill="#101090"/><rect x="1443.2" y="1001.7" width="2" height="2" fill="#fff" opacity=".7"/><rect x="1467.4" y="997.0" width="7" height="7" fill="#101090"/><rect x="1469.9" y="999.5" width="2" height="2" fill="#fff" opacity=".7"/><rect x="1494.1" y="995.1" width="7" height="7" fill="#101090"/><rect x="1496.6" y="997.6" width="2" height="2" fill="#fff" opacity=".7"/><rect x="1520.8" y="994.7" width="7" height="7" fill="#101090"/><rect x="1523.3" y="997.2" width="2" height="2" fill="#fff" opacity=".7"/><rect x="1547.6" y="994.3" width="7" height="7" fill="#101090"/><rect x="1550.1" y="996.8" width="2" height="2" fill="#fff" opacity=".7"/><rect x="1574.3" y="994.7" width="7" height="7" fill="#101090"/><rect x="1576.8" y="997.2" width="2" height="2" fill="#fff" opacity=".7"/><rect x="1617.1" y="995.8" width="7" height="7" fill="#101090"/><rect x="1619.6" y="998.3" width="2" height="2" fill="#fff" opacity=".7"/><rect x="1649.1" y="996.7" width="7" height="7" fill="#101090"/><rect x="1651.6" y="999.2" width="2" height="2" fill="#fff" opacity=".7"/><rect x="1681.2" y="997.9" width="7" height="7" fill="#101090"/><rect x="1683.7" y="1000.4" width="2" height="2" fill="#fff" opacity=".7"/><rect x="1702.6" y="998.8" width="7" height="7" fill="#101090"/><rect x="1705.1" y="1001.3" width="2" height="2" fill="#fff" opacity=".7"/><rect x="1724.0" y="998.5" width="7" height="7" fill="#101090"/><rect x="1726.5" y="1001.0" width="2" height="2" fill="#fff" opacity=".7"/><rect x="1756.0" y="998.6" width="7" height="7" fill="#101090"/><rect x="1758.5" y="1001.1" width="2" height="2" fill="#fff" opacity=".7"/><rect x="1788.1" y="998.7" width="7" height="7" fill="#101090"/><rect x="1790.6" y="1001.2" width="2" height="2" fill="#fff" opacity=".7"/><path d="M1150.2 995.1 L1203.7 994.9 L1257.1 994.4 L1310.5 994.1 L1364.0 994.0 L1390.7 992.5 L1417.5 991.0 L1444.2 990.5 L1470.9 988.2 L1497.6 987.1 L1524.3 986.6 L1551.1 987.6 L1577.8 987.3 L1620.6 988.5 L1652.6 989.3 L1684.7 990.1 L1706.1 992.0 L1727.5 991.4 L1759.5 991.7 L1791.6 992.0" fill="none" stroke="#1010b0" stroke-width="1.1"/><rect x="1146.7" y="991.6" width="7" height="7" fill="#1010b0"/><rect x="1149.2" y="994.1" width="2" height="2" fill="#fff" opacity=".7"/><rect x="1200.2" y="991.4" width="7" height="7" fill="#1010b0"/><rect x="1202.7" y="993.9" width="2" height="2" fill="#fff" opacity=".7"/><rect x="1253.6" y="990.9" width="7" height="7" fill="#1010b0"/><rect x="1256.1" y="993.4" width="2" height="2" fill="#fff" opacity=".7"/><rect x="1307.0" y="990.6" width="7" height="7" fill="#1010b0"/><rect x="1309.5" y="993.1" width="2" height="2" fill="#fff" opacity=".7"/><rect x="1360.5" y="990.5" width="7" height="7" fill="#1010b0"/><rect x="1363.0" y="993.0" width="2" height="2" fill="#fff" opacity=".7"/><rect x="1387.2" y="989.0" width="7" height="7" fill="#1010b0"/><rect x="1389.7" y="991.5" width="2" height="2" fill="#fff" opacity=".7"/><rect x="1414.0" y="987.5" width="7" height="7" fill="#1010b0"/><rect x="1416.5" y="990.0" width="2" height="2" fill="#fff" opacity=".7"/><rect x="1440.7" y="987.0" width="7" height="7" fill="#1010b0"/><rect x="1443.2" y="989.5" width="2" height="2" fill="#fff" opacity=".7"/><rect x="1467.4" y="984.7" width="7" height="7" fill="#1010b0"/><rect x="1469.9" y="987.2" width="2" height="2" fill="#fff" opacity=".7"/><rect x="1494.1" y="983.6" width="7" height="7" fill="#1010b0"/><rect x="1496.6" y="986.1" width="2" height="2" fill="#fff" opacity=".7"/><rect x="1520.8" y="983.1" width="7" height="7" fill="#1010b0"/><rect x="1523.3" y="985.6" width="2" height="2" fill="#fff" opacity=".7"/><rect x="1547.6" y="984.1" width="7" height="7" fill="#1010b0"/><rect x="1550.1" y="986.6" width="2" height="2" fill="#fff" opacity=".7"/><rect x="1574.3" y="983.8" width="7" height="7" fill="#1010b0"/><rect x="1576.8" y="986.3" width="2" height="2" fill="#fff" opacity=".7"/><rect x="1617.1" y="985.0" width="7" height="7" fill="#1010b0"/><rect x="1619.6" y="987.5" width="2" height="2" fill="#fff" opacity=".7"/><rect x="1649.1" y="985.8" width="7" height="7" fill="#1010b0"/><rect x="1651.6" y="988.3" width="2" height="2" fill="#fff" opacity=".7"/><rect x="1681.2" y="986.6" width="7" height="7" fill="#1010b0"/><rect x="1683.7" y="989.1" width="2" height="2" fill="#fff" opacity=".7"/><rect x="1702.6" y="988.5" width="7" height="7" fill="#1010b0"/><rect x="1705.1" y="991.0" width="2" height="2" fill="#fff" opacity=".7"/><rect x="1724.0" y="987.9" width="7" height="7" fill="#1010b0"/><rect x="1726.5" y="990.4" width="2" height="2" fill="#fff" opacity=".7"/><rect x="1756.0" y="988.2" width="7" height="7" fill="#1010b0"/><rect x="1758.5" y="990.7" width="2" height="2" fill="#fff" opacity=".7"/><rect x="1788.1" y="988.5" width="7" height="7" fill="#1010b0"/><rect x="1790.6" y="991.0" width="2" height="2" fill="#fff" opacity=".7"/><path d="M1150.2 985.4 L1203.7 985.1 L1257.1 984.0 L1310.5 983.8 L1364.0 983.3 L1390.7 980.4 L1417.5 977.8 L1444.2 977.8 L1470.9 975.2 L1497.6 976.1 L1524.3 975.3 L1551.1 977.0 L1577.8 977.1 L1620.6 977.6 L1652.6 978.7 L1684.7 979.6 L1706.1 982.3 L1727.5 981.0 L1759.5 981.6 L1791.6 982.3" fill="none" stroke="#1010d0" stroke-width="1.1"/><rect x="1146.7" y="981.9" width="7" height="7" fill="#1010d0"/><rect x="1149.2" y="984.4" width="2" height="2" fill="#fff" opacity=".7"/><rect x="1200.2" y="981.6" width="7" height="7" fill="#1010d0"/><rect x="1202.7" y="984.1" width="2" height="2" fill="#fff" opacity=".7"/><rect x="1253.6" y="980.5" width="7" height="7" fill="#1010d0"/><rect x="1256.1" y="983.0" width="2" height="2" fill="#fff" opacity=".7"/><rect x="1307.0" y="980.3" width="7" height="7" fill="#1010d0"/><rect x="1309.5" y="982.8" width="2" height="2" fill="#fff" opacity=".7"/><rect x="1360.5" y="979.8" width="7" height="7" fill="#1010d0"/><rect x="1363.0" y="982.3" width="2" height="2" fill="#fff" opacity=".7"/><rect x="1387.2" y="976.9" width="7" height="7" fill="#1010d0"/><rect x="1389.7" y="979.4" width="2" height="2" fill="#fff" opacity=".7"/><rect x="1414.0" y="974.3" width="7" height="7" fill="#1010d0"/><rect x="1416.5" y="976.8" width="2" height="2" fill="#fff" opacity=".7"/><rect x="1440.7" y="974.3" width="7" height="7" fill="#1010d0"/><rect x="1443.2" y="976.8" width="2" height="2" fill="#fff" opacity=".7"/><rect x="1467.4" y="971.7" width="7" height="7" fill="#1010d0"/><rect x="1469.9" y="974.2" width="2" height="2" fill="#fff" opacity=".7"/><rect x="1494.1" y="972.6" width="7" height="7" fill="#1010d0"/><rect x="1496.6" y="975.1" width="2" height="2" fill="#fff" opacity=".7"/><rect x="1520.8" y="971.8" width="7" height="7" fill="#1010d0"/><rect x="1523.3" y="974.3" width="2" height="2" fill="#fff" opacity=".7"/><rect x="1547.6" y="973.5" width="7" height="7" fill="#1010d0"/><rect x="1550.1" y="976.0" width="2" height="2" fill="#fff" opacity=".7"/><rect x="1574.3" y="973.6" width="7" height="7" fill="#1010d0"/><rect x="1576.8" y="976.1" width="2" height="2" fill="#fff" opacity=".7"/><rect x="1617.1" y="974.1" width="7" height="7" fill="#1010d0"/><rect x="1619.6" y="976.6" width="2" height="2" fill="#fff" opacity=".7"/><rect x="1649.1" y="975.2" width="7" height="7" fill="#1010d0"/><rect x="1651.6" y="977.7" width="2" height="2" fill="#fff" opacity=".7"/><rect x="1681.2" y="976.1" width="7" height="7" fill="#1010d0"/><rect x="1683.7" y="978.6" width="2" height="2" fill="#fff" opacity=".7"/><rect x="1702.6" y="978.8" width="7" height="7" fill="#1010d0"/><rect x="1705.1" y="981.3" width="2" height="2" fill="#fff" opacity=".7"/><rect x="1724.0" y="977.5" width="7" height="7" fill="#1010d0"/><rect x="1726.5" y="980.0" width="2" height="2" fill="#fff" opacity=".7"/><rect x="1756.0" y="978.1" width="7" height="7" fill="#1010d0"/><rect x="1758.5" y="980.6" width="2" height="2" fill="#fff" opacity=".7"/><rect x="1788.1" y="978.8" width="7" height="7" fill="#1010d0"/><rect x="1790.6" y="981.3" width="2" height="2" fill="#fff" opacity=".7"/><path d="M1150.2 971.9 L1203.7 970.9 L1257.1 969.5 L1310.5 969.0 L1364.0 968.2 L1390.7 964.3 L1417.5 961.6 L1444.2 961.8 L1470.9 958.8 L1497.6 960.6 L1524.3 959.7 L1551.1 961.6 L1577.8 961.4 L1620.6 961.8 L1652.6 963.0 L1684.7 964.3 L1706.1 967.6 L1727.5 965.6 L1759.5 966.4 L1791.6 967.5" fill="none" stroke="#1a80b8" stroke-width="1.1"/><rect x="1146.7" y="968.4" width="7" height="7" fill="#1a80b8"/><rect x="1149.2" y="970.9" width="2" height="2" fill="#fff" opacity=".7"/><rect x="1200.2" y="967.4" width="7" height="7" fill="#1a80b8"/><rect x="1202.7" y="969.9" width="2" height="2" fill="#fff" opacity=".7"/><rect x="1253.6" y="966.0" width="7" height="7" fill="#1a80b8"/><rect x="1256.1" y="968.5" width="2" height="2" fill="#fff" opacity=".7"/><rect x="1307.0" y="965.5" width="7" height="7" fill="#1a80b8"/><rect x="1309.5" y="968.0" width="2" height="2" fill="#fff" opacity=".7"/><rect x="1360.5" y="964.7" width="7" height="7" fill="#1a80b8"/><rect x="1363.0" y="967.2" width="2" height="2" fill="#fff" opacity=".7"/><rect x="1387.2" y="960.8" width="7" height="7" fill="#1a80b8"/><rect x="1389.7" y="963.3" width="2" height="2" fill="#fff" opacity=".7"/><rect x="1414.0" y="958.1" width="7" height="7" fill="#1a80b8"/><rect x="1416.5" y="960.6" width="2" height="2" fill="#fff" opacity=".7"/><rect x="1440.7" y="958.3" width="7" height="7" fill="#1a80b8"/><rect x="1443.2" y="960.8" width="2" height="2" fill="#fff" opacity=".7"/><rect x="1467.4" y="955.3" width="7" height="7" fill="#1a80b8"/><rect x="1469.9" y="957.8" width="2" height="2" fill="#fff" opacity=".7"/><rect x="1494.1" y="957.1" width="7" height="7" fill="#1a80b8"/><rect x="1496.6" y="959.6" width="2" height="2" fill="#fff" opacity=".7"/><rect x="1520.8" y="956.2" width="7" height="7" fill="#1a80b8"/><rect x="1523.3" y="958.7" width="2" height="2" fill="#fff" opacity=".7"/><rect x="1547.6" y="958.1" width="7" height="7" fill="#1a80b8"/><rect x="1550.1" y="960.6" width="2" height="2" fill="#fff" opacity=".7"/><rect x="1574.3" y="957.9" width="7" height="7" fill="#1a80b8"/><rect x="1576.8" y="960.4" width="2" height="2" fill="#fff" opacity=".7"/><rect x="1617.1" y="958.3" width="7" height="7" fill="#1a80b8"/><rect x="1619.6" y="960.8" width="2" height="2" fill="#fff" opacity=".7"/><rect x="1649.1" y="959.5" width="7" height="7" fill="#1a80b8"/><rect x="1651.6" y="962.0" width="2" height="2" fill="#fff" opacity=".7"/><rect x="1681.2" y="960.8" width="7" height="7" fill="#1a80b8"/><rect x="1683.7" y="963.3" width="2" height="2" fill="#fff" opacity=".7"/><rect x="1702.6" y="964.1" width="7" height="7" fill="#1a80b8"/><rect x="1705.1" y="966.6" width="2" height="2" fill="#fff" opacity=".7"/><rect x="1724.0" y="962.1" width="7" height="7" fill="#1a80b8"/><rect x="1726.5" y="964.6" width="2" height="2" fill="#fff" opacity=".7"/><rect x="1756.0" y="962.9" width="7" height="7" fill="#1a80b8"/><rect x="1758.5" y="965.4" width="2" height="2" fill="#fff" opacity=".7"/><rect x="1788.1" y="964.0" width="7" height="7" fill="#1a80b8"/><rect x="1790.6" y="966.5" width="2" height="2" fill="#fff" opacity=".7"/><path d="M1150.2 956.9 L1203.7 955.6 L1257.1 953.6 L1310.5 952.6 L1364.0 951.6 L1390.7 948.0 L1417.5 945.2 L1444.2 945.0 L1470.9 943.1 L1497.6 944.5 L1524.3 944.5 L1551.1 945.5 L1577.8 947.0 L1620.6 946.6 L1652.6 947.4 L1684.7 948.4 L1706.1 950.0 L1727.5 950.0 L1759.5 951.1 L1791.6 952.7" fill="none" stroke="#20d8e4" stroke-width="1.1"/><rect x="1146.7" y="953.4" width="7" height="7" fill="#20d8e4"/><rect x="1149.2" y="955.9" width="2" height="2" fill="#fff" opacity=".7"/><rect x="1200.2" y="952.1" width="7" height="7" fill="#20d8e4"/><rect x="1202.7" y="954.6" width="2" height="2" fill="#fff" opacity=".7"/><rect x="1253.6" y="950.1" width="7" height="7" fill="#20d8e4"/><rect x="1256.1" y="952.6" width="2" height="2" fill="#fff" opacity=".7"/><rect x="1307.0" y="949.1" width="7" height="7" fill="#20d8e4"/><rect x="1309.5" y="951.6" width="2" height="2" fill="#fff" opacity=".7"/><rect x="1360.5" y="948.1" width="7" height="7" fill="#20d8e4"/><rect x="1363.0" y="950.6" width="2" height="2" fill="#fff" opacity=".7"/><rect x="1387.2" y="944.5" width="7" height="7" fill="#20d8e4"/><rect x="1389.7" y="947.0" width="2" height="2" fill="#fff" opacity=".7"/><rect x="1414.0" y="941.7" width="7" height="7" fill="#20d8e4"/><rect x="1416.5" y="944.2" width="2" height="2" fill="#fff" opacity=".7"/><rect x="1440.7" y="941.5" width="7" height="7" fill="#20d8e4"/><rect x="1443.2" y="944.0" width="2" height="2" fill="#fff" opacity=".7"/><rect x="1467.4" y="939.6" width="7" height="7" fill="#20d8e4"/><rect x="1469.9" y="942.1" width="2" height="2" fill="#fff" opacity=".7"/><rect x="1494.1" y="941.0" width="7" height="7" fill="#20d8e4"/><rect x="1496.6" y="943.5" width="2" height="2" fill="#fff" opacity=".7"/><rect x="1520.8" y="941.0" width="7" height="7" fill="#20d8e4"/><rect x="1523.3" y="943.5" width="2" height="2" fill="#fff" opacity=".7"/><rect x="1547.6" y="942.0" width="7" height="7" fill="#20d8e4"/><rect x="1550.1" y="944.5" width="2" height="2" fill="#fff" opacity=".7"/><rect x="1574.3" y="943.5" width="7" height="7" fill="#20d8e4"/><rect x="1576.8" y="946.0" width="2" height="2" fill="#fff" opacity=".7"/><rect x="1617.1" y="943.1" width="7" height="7" fill="#20d8e4"/><rect x="1619.6" y="945.6" width="2" height="2" fill="#fff" opacity=".7"/><rect x="1649.1" y="943.9" width="7" height="7" fill="#20d8e4"/><rect x="1651.6" y="946.4" width="2" height="2" fill="#fff" opacity=".7"/><rect x="1681.2" y="944.9" width="7" height="7" fill="#20d8e4"/><rect x="1683.7" y="947.4" width="2" height="2" fill="#fff" opacity=".7"/><rect x="1702.6" y="946.5" width="7" height="7" fill="#20d8e4"/><rect x="1705.1" y="949.0" width="2" height="2" fill="#fff" opacity=".7"/><rect x="1724.0" y="946.5" width="7" height="7" fill="#20d8e4"/><rect x="1726.5" y="949.0" width="2" height="2" fill="#fff" opacity=".7"/><rect x="1756.0" y="947.6" width="7" height="7" fill="#20d8e4"/><rect x="1758.5" y="950.1" width="2" height="2" fill="#fff" opacity=".7"/><rect x="1788.1" y="949.2" width="7" height="7" fill="#20d8e4"/><rect x="1790.6" y="951.7" width="2" height="2" fill="#fff" opacity=".7"/><path d="M1150.2 941.3 L1203.7 939.6 L1257.1 936.9 L1310.5 935.6 L1364.0 934.1 L1390.7 930.3 L1417.5 928.7 L1444.2 929.0 L1470.9 927.0 L1497.6 929.7 L1524.3 929.0 L1551.1 929.7 L1577.8 931.4 L1620.6 930.1 L1652.6 930.8 L1684.7 932.2 L1706.1 933.4 L1727.5 933.4 L1759.5 935.0 L1791.6 937.0" fill="none" stroke="#20e884" stroke-width="1.1"/><rect x="1146.7" y="937.8" width="7" height="7" fill="#20e884"/><rect x="1149.2" y="940.3" width="2" height="2" fill="#fff" opacity=".7"/><rect x="1200.2" y="936.1" width="7" height="7" fill="#20e884"/><rect x="1202.7" y="938.6" width="2" height="2" fill="#fff" opacity=".7"/><rect x="1253.6" y="933.4" width="7" height="7" fill="#20e884"/><rect x="1256.1" y="935.9" width="2" height="2" fill="#fff" opacity=".7"/><rect x="1307.0" y="932.1" width="7" height="7" fill="#20e884"/><rect x="1309.5" y="934.6" width="2" height="2" fill="#fff" opacity=".7"/><rect x="1360.5" y="930.6" width="7" height="7" fill="#20e884"/><rect x="1363.0" y="933.1" width="2" height="2" fill="#fff" opacity=".7"/><rect x="1387.2" y="926.8" width="7" height="7" fill="#20e884"/><rect x="1389.7" y="929.3" width="2" height="2" fill="#fff" opacity=".7"/><rect x="1414.0" y="925.2" width="7" height="7" fill="#20e884"/><rect x="1416.5" y="927.7" width="2" height="2" fill="#fff" opacity=".7"/><rect x="1440.7" y="925.5" width="7" height="7" fill="#20e884"/><rect x="1443.2" y="928.0" width="2" height="2" fill="#fff" opacity=".7"/><rect x="1467.4" y="923.5" width="7" height="7" fill="#20e884"/><rect x="1469.9" y="926.0" width="2" height="2" fill="#fff" opacity=".7"/><rect x="1494.1" y="926.2" width="7" height="7" fill="#20e884"/><rect x="1496.6" y="928.7" width="2" height="2" fill="#fff" opacity=".7"/><rect x="1520.8" y="925.5" width="7" height="7" fill="#20e884"/><rect x="1523.3" y="928.0" width="2" height="2" fill="#fff" opacity=".7"/><rect x="1547.6" y="926.2" width="7" height="7" fill="#20e884"/><rect x="1550.1" y="928.7" width="2" height="2" fill="#fff" opacity=".7"/><rect x="1574.3" y="927.9" width="7" height="7" fill="#20e884"/><rect x="1576.8" y="930.4" width="2" height="2" fill="#fff" opacity=".7"/><rect x="1617.1" y="926.6" width="7" height="7" fill="#20e884"/><rect x="1619.6" y="929.1" width="2" height="2" fill="#fff" opacity=".7"/><rect x="1649.1" y="927.3" width="7" height="7" fill="#20e884"/><rect x="1651.6" y="929.8" width="2" height="2" fill="#fff" opacity=".7"/><rect x="1681.2" y="928.7" width="7" height="7" fill="#20e884"/><rect x="1683.7" y="931.2" width="2" height="2" fill="#fff" opacity=".7"/><rect x="1702.6" y="929.9" width="7" height="7" fill="#20e884"/><rect x="1705.1" y="932.4" width="2" height="2" fill="#fff" opacity=".7"/><rect x="1724.0" y="929.9" width="7" height="7" fill="#20e884"/><rect x="1726.5" y="932.4" width="2" height="2" fill="#fff" opacity=".7"/><rect x="1756.0" y="931.5" width="7" height="7" fill="#20e884"/><rect x="1758.5" y="934.0" width="2" height="2" fill="#fff" opacity=".7"/><rect x="1788.1" y="933.5" width="7" height="7" fill="#20e884"/><rect x="1790.6" y="936.0" width="2" height="2" fill="#fff" opacity=".7"/><path d="M1150.2 924.5 L1203.7 922.1 L1257.1 918.7 L1310.5 917.4 L1364.0 915.5 L1390.7 913.3 L1417.5 912.3 L1444.2 912.9 L1470.9 909.8 L1497.6 914.4 L1524.3 913.2 L1551.1 914.7 L1577.8 915.6 L1620.6 914.9 L1652.6 916.0 L1684.7 916.7 L1706.1 917.3 L1727.5 917.2 L1759.5 918.9 L1791.6 921.6" fill="none" stroke="#10b028" stroke-width="1.1"/><rect x="1146.7" y="921.0" width="7" height="7" fill="#10b028"/><rect x="1149.2" y="923.5" width="2" height="2" fill="#fff" opacity=".7"/><rect x="1200.2" y="918.6" width="7" height="7" fill="#10b028"/><rect x="1202.7" y="921.1" width="2" height="2" fill="#fff" opacity=".7"/><rect x="1253.6" y="915.2" width="7" height="7" fill="#10b028"/><rect x="1256.1" y="917.7" width="2" height="2" fill="#fff" opacity=".7"/><rect x="1307.0" y="913.9" width="7" height="7" fill="#10b028"/><rect x="1309.5" y="916.4" width="2" height="2" fill="#fff" opacity=".7"/><rect x="1360.5" y="912.0" width="7" height="7" fill="#10b028"/><rect x="1363.0" y="914.5" width="2" height="2" fill="#fff" opacity=".7"/><rect x="1387.2" y="909.8" width="7" height="7" fill="#10b028"/><rect x="1389.7" y="912.3" width="2" height="2" fill="#fff" opacity=".7"/><rect x="1414.0" y="908.8" width="7" height="7" fill="#10b028"/><rect x="1416.5" y="911.3" width="2" height="2" fill="#fff" opacity=".7"/><rect x="1440.7" y="909.4" width="7" height="7" fill="#10b028"/><rect x="1443.2" y="911.9" width="2" height="2" fill="#fff" opacity=".7"/><rect x="1467.4" y="906.3" width="7" height="7" fill="#10b028"/><rect x="1469.9" y="908.8" width="2" height="2" fill="#fff" opacity=".7"/><rect x="1494.1" y="910.9" width="7" height="7" fill="#10b028"/><rect x="1496.6" y="913.4" width="2" height="2" fill="#fff" opacity=".7"/><rect x="1520.8" y="909.7" width="7" height="7" fill="#10b028"/><rect x="1523.3" y="912.2" width="2" height="2" fill="#fff" opacity=".7"/><rect x="1547.6" y="911.2" width="7" height="7" fill="#10b028"/><rect x="1550.1" y="913.7" width="2" height="2" fill="#fff" opacity=".7"/><rect x="1574.3" y="912.1" width="7" height="7" fill="#10b028"/><rect x="1576.8" y="914.6" width="2" height="2" fill="#fff" opacity=".7"/><rect x="1617.1" y="911.4" width="7" height="7" fill="#10b028"/><rect x="1619.6" y="913.9" width="2" height="2" fill="#fff" opacity=".7"/><rect x="1649.1" y="912.5" width="7" height="7" fill="#10b028"/><rect x="1651.6" y="915.0" width="2" height="2" fill="#fff" opacity=".7"/><rect x="1681.2" y="913.2" width="7" height="7" fill="#10b028"/><rect x="1683.7" y="915.7" width="2" height="2" fill="#fff" opacity=".7"/><rect x="1702.6" y="913.8" width="7" height="7" fill="#10b028"/><rect x="1705.1" y="916.3" width="2" height="2" fill="#fff" opacity=".7"/><rect x="1724.0" y="913.7" width="7" height="7" fill="#10b028"/><rect x="1726.5" y="916.2" width="2" height="2" fill="#fff" opacity=".7"/><rect x="1756.0" y="915.4" width="7" height="7" fill="#10b028"/><rect x="1758.5" y="917.9" width="2" height="2" fill="#fff" opacity=".7"/><rect x="1788.1" y="918.1" width="7" height="7" fill="#10b028"/><rect x="1790.6" y="920.6" width="2" height="2" fill="#fff" opacity=".7"/><path d="M1150.2 907.4 L1203.7 904.3 L1257.1 900.1 L1310.5 898.4 L1364.0 896.4 L1390.7 892.9 L1417.5 891.5 L1444.2 892.2 L1470.9 889.6 L1497.6 893.6 L1524.3 893.7 L1551.1 895.1 L1577.8 897.3 L1620.6 894.9 L1652.6 896.3 L1684.7 897.4 L1706.1 898.3 L1727.5 898.3 L1759.5 900.4 L1791.6 903.6" fill="none" stroke="#20c020" stroke-width="1.1"/><rect x="1146.7" y="903.9" width="7" height="7" fill="#20c020"/><rect x="1149.2" y="906.4" width="2" height="2" fill="#fff" opacity=".7"/><rect x="1200.2" y="900.8" width="7" height="7" fill="#20c020"/><rect x="1202.7" y="903.3" width="2" height="2" fill="#fff" opacity=".7"/><rect x="1253.6" y="896.6" width="7" height="7" fill="#20c020"/><rect x="1256.1" y="899.1" width="2" height="2" fill="#fff" opacity=".7"/><rect x="1307.0" y="894.9" width="7" height="7" fill="#20c020"/><rect x="1309.5" y="897.4" width="2" height="2" fill="#fff" opacity=".7"/><rect x="1360.5" y="892.9" width="7" height="7" fill="#20c020"/><rect x="1363.0" y="895.4" width="2" height="2" fill="#fff" opacity=".7"/><rect x="1387.2" y="889.4" width="7" height="7" fill="#20c020"/><rect x="1389.7" y="891.9" width="2" height="2" fill="#fff" opacity=".7"/><rect x="1414.0" y="888.0" width="7" height="7" fill="#20c020"/><rect x="1416.5" y="890.5" width="2" height="2" fill="#fff" opacity=".7"/><rect x="1440.7" y="888.7" width="7" height="7" fill="#20c020"/><rect x="1443.2" y="891.2" width="2" height="2" fill="#fff" opacity=".7"/><rect x="1467.4" y="886.1" width="7" height="7" fill="#20c020"/><rect x="1469.9" y="888.6" width="2" height="2" fill="#fff" opacity=".7"/><rect x="1494.1" y="890.1" width="7" height="7" fill="#20c020"/><rect x="1496.6" y="892.6" width="2" height="2" fill="#fff" opacity=".7"/><rect x="1520.8" y="890.2" width="7" height="7" fill="#20c020"/><rect x="1523.3" y="892.7" width="2" height="2" fill="#fff" opacity=".7"/><rect x="1547.6" y="891.6" width="7" height="7" fill="#20c020"/><rect x="1550.1" y="894.1" width="2" height="2" fill="#fff" opacity=".7"/><rect x="1574.3" y="893.8" width="7" height="7" fill="#20c020"/><rect x="1576.8" y="896.3" width="2" height="2" fill="#fff" opacity=".7"/><rect x="1617.1" y="891.4" width="7" height="7" fill="#20c020"/><rect x="1619.6" y="893.9" width="2" height="2" fill="#fff" opacity=".7"/><rect x="1649.1" y="892.8" width="7" height="7" fill="#20c020"/><rect x="1651.6" y="895.3" width="2" height="2" fill="#fff" opacity=".7"/><rect x="1681.2" y="893.9" width="7" height="7" fill="#20c020"/><rect x="1683.7" y="896.4" width="2" height="2" fill="#fff" opacity=".7"/><rect x="1702.6" y="894.8" width="7" height="7" fill="#20c020"/><rect x="1705.1" y="897.3" width="2" height="2" fill="#fff" opacity=".7"/><rect x="1724.0" y="894.8" width="7" height="7" fill="#20c020"/><rect x="1726.5" y="897.3" width="2" height="2" fill="#fff" opacity=".7"/><rect x="1756.0" y="896.9" width="7" height="7" fill="#20c020"/><rect x="1758.5" y="899.4" width="2" height="2" fill="#fff" opacity=".7"/><rect x="1788.1" y="900.1" width="7" height="7" fill="#20c020"/><rect x="1790.6" y="902.6" width="2" height="2" fill="#fff" opacity=".7"/><path d="M1150.2 893.3 L1203.7 888.7 L1257.1 884.1 L1310.5 882.0 L1364.0 879.5 L1390.7 875.1 L1417.5 872.7 L1444.2 874.6 L1470.9 872.3 L1497.6 876.6 L1524.3 878.3 L1551.1 879.8 L1577.8 881.2 L1620.6 878.6 L1652.6 880.5 L1684.7 881.1 L1706.1 882.2 L1727.5 882.2 L1759.5 884.7 L1791.6 888.2" fill="none" stroke="#48b414" stroke-width="1.1"/><rect x="1146.7" y="889.8" width="7" height="7" fill="#48b414"/><rect x="1149.2" y="892.3" width="2" height="2" fill="#fff" opacity=".7"/><rect x="1200.2" y="885.2" width="7" height="7" fill="#48b414"/><rect x="1202.7" y="887.7" width="2" height="2" fill="#fff" opacity=".7"/><rect x="1253.6" y="880.6" width="7" height="7" fill="#48b414"/><rect x="1256.1" y="883.1" width="2" height="2" fill="#fff" opacity=".7"/><rect x="1307.0" y="878.5" width="7" height="7" fill="#48b414"/><rect x="1309.5" y="881.0" width="2" height="2" fill="#fff" opacity=".7"/><rect x="1360.5" y="876.0" width="7" height="7" fill="#48b414"/><rect x="1363.0" y="878.5" width="2" height="2" fill="#fff" opacity=".7"/><rect x="1387.2" y="871.6" width="7" height="7" fill="#48b414"/><rect x="1389.7" y="874.1" width="2" height="2" fill="#fff" opacity=".7"/><rect x="1414.0" y="869.2" width="7" height="7" fill="#48b414"/><rect x="1416.5" y="871.7" width="2" height="2" fill="#fff" opacity=".7"/><rect x="1440.7" y="871.1" width="7" height="7" fill="#48b414"/><rect x="1443.2" y="873.6" width="2" height="2" fill="#fff" opacity=".7"/><rect x="1467.4" y="868.8" width="7" height="7" fill="#48b414"/><rect x="1469.9" y="871.3" width="2" height="2" fill="#fff" opacity=".7"/><rect x="1494.1" y="873.1" width="7" height="7" fill="#48b414"/><rect x="1496.6" y="875.6" width="2" height="2" fill="#fff" opacity=".7"/><rect x="1520.8" y="874.8" width="7" height="7" fill="#48b414"/><rect x="1523.3" y="877.3" width="2" height="2" fill="#fff" opacity=".7"/><rect x="1547.6" y="876.3" width="7" height="7" fill="#48b414"/><rect x="1550.1" y="878.8" width="2" height="2" fill="#fff" opacity=".7"/><rect x="1574.3" y="877.7" width="7" height="7" fill="#48b414"/><rect x="1576.8" y="880.2" width="2" height="2" fill="#fff" opacity=".7"/><rect x="1617.1" y="875.1" width="7" height="7" fill="#48b414"/><rect x="1619.6" y="877.6" width="2" height="2" fill="#fff" opacity=".7"/><rect x="1649.1" y="877.0" width="7" height="7" fill="#48b414"/><rect x="1651.6" y="879.5" width="2" height="2" fill="#fff" opacity=".7"/><rect x="1681.2" y="877.6" width="7" height="7" fill="#48b414"/><rect x="1683.7" y="880.1" width="2" height="2" fill="#fff" opacity=".7"/><rect x="1702.6" y="878.7" width="7" height="7" fill="#48b414"/><rect x="1705.1" y="881.2" width="2" height="2" fill="#fff" opacity=".7"/><rect x="1724.0" y="878.7" width="7" height="7" fill="#48b414"/><rect x="1726.5" y="881.2" width="2" height="2" fill="#fff" opacity=".7"/><rect x="1756.0" y="881.2" width="7" height="7" fill="#48b414"/><rect x="1758.5" y="883.7" width="2" height="2" fill="#fff" opacity=".7"/><rect x="1788.1" y="884.7" width="7" height="7" fill="#48b414"/><rect x="1790.6" y="887.2" width="2" height="2" fill="#fff" opacity=".7"/><path d="M1150.2 874.6 L1203.7 870.5 L1257.1 865.0 L1310.5 862.8 L1364.0 859.8 L1390.7 855.2 L1417.5 854.2 L1444.2 855.2 L1470.9 852.1 L1497.6 857.4 L1524.3 858.2 L1551.1 858.6 L1577.8 860.7 L1620.6 860.2 L1652.6 861.9 L1684.7 862.1 L1706.1 863.5 L1727.5 863.5 L1759.5 866.3 L1791.6 870.5" fill="none" stroke="#64b414" stroke-width="1.1"/><rect x="1146.7" y="871.1" width="7" height="7" fill="#64b414"/><rect x="1149.2" y="873.6" width="2" height="2" fill="#fff" opacity=".7"/><rect x="1200.2" y="867.0" width="7" height="7" fill="#64b414"/><rect x="1202.7" y="869.5" width="2" height="2" fill="#fff" opacity=".7"/><rect x="1253.6" y="861.5" width="7" height="7" fill="#64b414"/><rect x="1256.1" y="864.0" width="2" height="2" fill="#fff" opacity=".7"/><rect x="1307.0" y="859.3" width="7" height="7" fill="#64b414"/><rect x="1309.5" y="861.8" width="2" height="2" fill="#fff" opacity=".7"/><rect x="1360.5" y="856.3" width="7" height="7" fill="#64b414"/><rect x="1363.0" y="858.8" width="2" height="2" fill="#fff" opacity=".7"/><rect x="1387.2" y="851.7" width="7" height="7" fill="#64b414"/><rect x="1389.7" y="854.2" width="2" height="2" fill="#fff" opacity=".7"/><rect x="1414.0" y="850.7" width="7" height="7" fill="#64b414"/><rect x="1416.5" y="853.2" width="2" height="2" fill="#fff" opacity=".7"/><rect x="1440.7" y="851.7" width="7" height="7" fill="#64b414"/><rect x="1443.2" y="854.2" width="2" height="2" fill="#fff" opacity=".7"/><rect x="1467.4" y="848.6" width="7" height="7" fill="#64b414"/><rect x="1469.9" y="851.1" width="2" height="2" fill="#fff" opacity=".7"/><rect x="1494.1" y="853.9" width="7" height="7" fill="#64b414"/><rect x="1496.6" y="856.4" width="2" height="2" fill="#fff" opacity=".7"/><rect x="1520.8" y="854.7" width="7" height="7" fill="#64b414"/><rect x="1523.3" y="857.2" width="2" height="2" fill="#fff" opacity=".7"/><rect x="1547.6" y="855.1" width="7" height="7" fill="#64b414"/><rect x="1550.1" y="857.6" width="2" height="2" fill="#fff" opacity=".7"/><rect x="1574.3" y="857.2" width="7" height="7" fill="#64b414"/><rect x="1576.8" y="859.7" width="2" height="2" fill="#fff" opacity=".7"/><rect x="1617.1" y="856.7" width="7" height="7" fill="#64b414"/><rect x="1619.6" y="859.2" width="2" height="2" fill="#fff" opacity=".7"/><rect x="1649.1" y="858.4" width="7" height="7" fill="#64b414"/><rect x="1651.6" y="860.9" width="2" height="2" fill="#fff" opacity=".7"/><rect x="1681.2" y="858.6" width="7" height="7" fill="#64b414"/><rect x="1683.7" y="861.1" width="2" height="2" fill="#fff" opacity=".7"/><rect x="1702.6" y="860.0" width="7" height="7" fill="#64b414"/><rect x="1705.1" y="862.5" width="2" height="2" fill="#fff" opacity=".7"/><rect x="1724.0" y="860.0" width="7" height="7" fill="#64b414"/><rect x="1726.5" y="862.5" width="2" height="2" fill="#fff" opacity=".7"/><rect x="1756.0" y="862.8" width="7" height="7" fill="#64b414"/><rect x="1758.5" y="865.3" width="2" height="2" fill="#fff" opacity=".7"/><rect x="1788.1" y="867.0" width="7" height="7" fill="#64b414"/><rect x="1790.6" y="869.5" width="2" height="2" fill="#fff" opacity=".7"/><path d="M1150.2 836.1 L1203.7 830.8 L1257.1 823.6 L1310.5 820.7 L1364.0 817.1 L1390.7 811.2 L1417.5 809.8 L1444.2 811.0 L1470.9 811.0 L1497.6 813.8 L1524.3 814.9 L1551.1 815.3 L1577.8 818.1 L1620.6 817.5 L1652.6 819.6 L1684.7 819.9 L1706.1 821.7 L1727.5 821.7 L1759.5 825.4 L1791.6 830.7" fill="none" stroke="#c0b414" stroke-width="1.1"/><rect x="1146.7" y="832.6" width="7" height="7" fill="#c0b414"/><rect x="1149.2" y="835.1" width="2" height="2" fill="#fff" opacity=".7"/><rect x="1200.2" y="827.3" width="7" height="7" fill="#c0b414"/><rect x="1202.7" y="829.8" width="2" height="2" fill="#fff" opacity=".7"/><rect x="1253.6" y="820.1" width="7" height="7" fill="#c0b414"/><rect x="1256.1" y="822.6" width="2" height="2" fill="#fff" opacity=".7"/><rect x="1307.0" y="817.2" width="7" height="7" fill="#c0b414"/><rect x="1309.5" y="819.7" width="2" height="2" fill="#fff" opacity=".7"/><rect x="1360.5" y="813.6" width="7" height="7" fill="#c0b414"/><rect x="1363.0" y="816.1" width="2" height="2" fill="#fff" opacity=".7"/><rect x="1387.2" y="807.7" width="7" height="7" fill="#c0b414"/><rect x="1389.7" y="810.2" width="2" height="2" fill="#fff" opacity=".7"/><rect x="1414.0" y="806.3" width="7" height="7" fill="#c0b414"/><rect x="1416.5" y="808.8" width="2" height="2" fill="#fff" opacity=".7"/><rect x="1440.7" y="807.5" width="7" height="7" fill="#c0b414"/><rect x="1443.2" y="810.0" width="2" height="2" fill="#fff" opacity=".7"/><rect x="1467.4" y="807.5" width="7" height="7" fill="#c0b414"/><rect x="1469.9" y="810.0" width="2" height="2" fill="#fff" opacity=".7"/><rect x="1494.1" y="810.3" width="7" height="7" fill="#c0b414"/><rect x="1496.6" y="812.8" width="2" height="2" fill="#fff" opacity=".7"/><rect x="1520.8" y="811.4" width="7" height="7" fill="#c0b414"/><rect x="1523.3" y="813.9" width="2" height="2" fill="#fff" opacity=".7"/><rect x="1547.6" y="811.8" width="7" height="7" fill="#c0b414"/><rect x="1550.1" y="814.3" width="2" height="2" fill="#fff" opacity=".7"/><rect x="1574.3" y="814.6" width="7" height="7" fill="#c0b414"/><rect x="1576.8" y="817.1" width="2" height="2" fill="#fff" opacity=".7"/><rect x="1617.1" y="814.0" width="7" height="7" fill="#c0b414"/><rect x="1619.6" y="816.5" width="2" height="2" fill="#fff" opacity=".7"/><rect x="1649.1" y="816.1" width="7" height="7" fill="#c0b414"/><rect x="1651.6" y="818.6" width="2" height="2" fill="#fff" opacity=".7"/><rect x="1681.2" y="816.4" width="7" height="7" fill="#c0b414"/><rect x="1683.7" y="818.9" width="2" height="2" fill="#fff" opacity=".7"/><rect x="1702.6" y="818.2" width="7" height="7" fill="#c0b414"/><rect x="1705.1" y="820.7" width="2" height="2" fill="#fff" opacity=".7"/><rect x="1724.0" y="818.2" width="7" height="7" fill="#c0b414"/><rect x="1726.5" y="820.7" width="2" height="2" fill="#fff" opacity=".7"/><rect x="1756.0" y="821.9" width="7" height="7" fill="#c0b414"/><rect x="1758.5" y="824.4" width="2" height="2" fill="#fff" opacity=".7"/><rect x="1788.1" y="827.2" width="7" height="7" fill="#c0b414"/><rect x="1790.6" y="829.7" width="2" height="2" fill="#fff" opacity=".7"/><path d="M1150.2 776.6 L1203.7 769.6 L1257.1 759.9 L1310.5 755.8 L1364.0 750.8 L1390.7 750.7 L1417.5 748.7 L1444.2 748.0 L1470.9 750.5 L1497.6 749.2 L1524.3 747.9 L1551.1 743.5 L1577.8 744.6 L1620.6 743.7 L1652.6 746.7 L1684.7 744.5 L1706.1 744.3 L1727.5 744.4 L1759.5 749.5 L1791.6 757.4" fill="none" stroke="#d0c818" stroke-width="1.1"/><rect x="1146.7" y="773.1" width="7" height="7" fill="#d0c818"/><rect x="1149.2" y="775.6" width="2" height="2" fill="#fff" opacity=".7"/><rect x="1200.2" y="766.1" width="7" height="7" fill="#d0c818"/><rect x="1202.7" y="768.6" width="2" height="2" fill="#fff" opacity=".7"/><rect x="1253.6" y="756.4" width="7" height="7" fill="#d0c818"/><rect x="1256.1" y="758.9" width="2" height="2" fill="#fff" opacity=".7"/><rect x="1307.0" y="752.3" width="7" height="7" fill="#d0c818"/><rect x="1309.5" y="754.8" width="2" height="2" fill="#fff" opacity=".7"/><rect x="1360.5" y="747.3" width="7" height="7" fill="#d0c818"/><rect x="1363.0" y="749.8" width="2" height="2" fill="#fff" opacity=".7"/><rect x="1387.2" y="747.2" width="7" height="7" fill="#d0c818"/><rect x="1389.7" y="749.7" width="2" height="2" fill="#fff" opacity=".7"/><rect x="1414.0" y="745.2" width="7" height="7" fill="#d0c818"/><rect x="1416.5" y="747.7" width="2" height="2" fill="#fff" opacity=".7"/><rect x="1440.7" y="744.5" width="7" height="7" fill="#d0c818"/><rect x="1443.2" y="747.0" width="2" height="2" fill="#fff" opacity=".7"/><rect x="1467.4" y="747.0" width="7" height="7" fill="#d0c818"/><rect x="1469.9" y="749.5" width="2" height="2" fill="#fff" opacity=".7"/><rect x="1494.1" y="745.7" width="7" height="7" fill="#d0c818"/><rect x="1496.6" y="748.2" width="2" height="2" fill="#fff" opacity=".7"/><rect x="1520.8" y="744.4" width="7" height="7" fill="#d0c818"/><rect x="1523.3" y="746.9" width="2" height="2" fill="#fff" opacity=".7"/><rect x="1547.6" y="740.0" width="7" height="7" fill="#d0c818"/><rect x="1550.1" y="742.5" width="2" height="2" fill="#fff" opacity=".7"/><rect x="1574.3" y="741.1" width="7" height="7" fill="#d0c818"/><rect x="1576.8" y="743.6" width="2" height="2" fill="#fff" opacity=".7"/><rect x="1617.1" y="740.2" width="7" height="7" fill="#d0c818"/><rect x="1619.6" y="742.7" width="2" height="2" fill="#fff" opacity=".7"/><rect x="1649.1" y="743.2" width="7" height="7" fill="#d0c818"/><rect x="1651.6" y="745.7" width="2" height="2" fill="#fff" opacity=".7"/><rect x="1681.2" y="741.0" width="7" height="7" fill="#d0c818"/><rect x="1683.7" y="743.5" width="2" height="2" fill="#fff" opacity=".7"/><rect x="1702.6" y="740.8" width="7" height="7" fill="#d0c818"/><rect x="1705.1" y="743.3" width="2" height="2" fill="#fff" opacity=".7"/><rect x="1724.0" y="740.9" width="7" height="7" fill="#d0c818"/><rect x="1726.5" y="743.4" width="2" height="2" fill="#fff" opacity=".7"/><rect x="1756.0" y="746.0" width="7" height="7" fill="#d0c818"/><rect x="1758.5" y="748.5" width="2" height="2" fill="#fff" opacity=".7"/><rect x="1788.1" y="753.9" width="7" height="7" fill="#d0c818"/><rect x="1790.6" y="756.4" width="2" height="2" fill="#fff" opacity=".7"/><path d="M1150.2 725.6 L1203.7 716.9 L1257.1 705.3 L1310.5 697.1 L1364.0 684.9 L1390.7 681.4 L1417.5 678.9 L1444.2 677.8 L1470.9 684.2 L1497.6 685.7 L1524.3 684.1 L1551.1 681.8 L1577.8 679.9 L1620.6 675.5 L1652.6 675.9 L1684.7 676.6 L1706.1 676.3 L1727.5 679.7 L1759.5 686.1 L1791.6 695.8" fill="none" stroke="#c43000" stroke-width="1.1"/><rect x="1146.7" y="722.1" width="7" height="7" fill="#c43000"/><rect x="1149.2" y="724.6" width="2" height="2" fill="#fff" opacity=".7"/><rect x="1200.2" y="713.4" width="7" height="7" fill="#c43000"/><rect x="1202.7" y="715.9" width="2" height="2" fill="#fff" opacity=".7"/><rect x="1253.6" y="701.8" width="7" height="7" fill="#c43000"/><rect x="1256.1" y="704.3" width="2" height="2" fill="#fff" opacity=".7"/><rect x="1307.0" y="693.6" width="7" height="7" fill="#c43000"/><rect x="1309.5" y="696.1" width="2" height="2" fill="#fff" opacity=".7"/><rect x="1360.5" y="681.4" width="7" height="7" fill="#c43000"/><rect x="1363.0" y="683.9" width="2" height="2" fill="#fff" opacity=".7"/><rect x="1387.2" y="677.9" width="7" height="7" fill="#c43000"/><rect x="1389.7" y="680.4" width="2" height="2" fill="#fff" opacity=".7"/><rect x="1414.0" y="675.4" width="7" height="7" fill="#c43000"/><rect x="1416.5" y="677.9" width="2" height="2" fill="#fff" opacity=".7"/><rect x="1440.7" y="674.3" width="7" height="7" fill="#c43000"/><rect x="1443.2" y="676.8" width="2" height="2" fill="#fff" opacity=".7"/><rect x="1467.4" y="680.7" width="7" height="7" fill="#c43000"/><rect x="1469.9" y="683.2" width="2" height="2" fill="#fff" opacity=".7"/><rect x="1494.1" y="682.2" width="7" height="7" fill="#c43000"/><rect x="1496.6" y="684.7" width="2" height="2" fill="#fff" opacity=".7"/><rect x="1520.8" y="680.6" width="7" height="7" fill="#c43000"/><rect x="1523.3" y="683.1" width="2" height="2" fill="#fff" opacity=".7"/><rect x="1547.6" y="678.3" width="7" height="7" fill="#c43000"/><rect x="1550.1" y="680.8" width="2" height="2" fill="#fff" opacity=".7"/><rect x="1574.3" y="676.4" width="7" height="7" fill="#c43000"/><rect x="1576.8" y="678.9" width="2" height="2" fill="#fff" opacity=".7"/><rect x="1617.1" y="672.0" width="7" height="7" fill="#c43000"/><rect x="1619.6" y="674.5" width="2" height="2" fill="#fff" opacity=".7"/><rect x="1649.1" y="672.4" width="7" height="7" fill="#c43000"/><rect x="1651.6" y="674.9" width="2" height="2" fill="#fff" opacity=".7"/><rect x="1681.2" y="673.1" width="7" height="7" fill="#c43000"/><rect x="1683.7" y="675.6" width="2" height="2" fill="#fff" opacity=".7"/><rect x="1702.6" y="672.8" width="7" height="7" fill="#c43000"/><rect x="1705.1" y="675.3" width="2" height="2" fill="#fff" opacity=".7"/><rect x="1724.0" y="676.2" width="7" height="7" fill="#c43000"/><rect x="1726.5" y="678.7" width="2" height="2" fill="#fff" opacity=".7"/><rect x="1756.0" y="682.6" width="7" height="7" fill="#c43000"/><rect x="1758.5" y="685.1" width="2" height="2" fill="#fff" opacity=".7"/><rect x="1788.1" y="692.3" width="7" height="7" fill="#c43000"/><rect x="1790.6" y="694.8" width="2" height="2" fill="#fff" opacity=".7"/><path d="M1150.2 673.4 L1203.7 663.2 L1257.1 649.2 L1310.5 639.6 L1364.0 625.1 L1390.7 617.2 L1417.5 614.2 L1444.2 612.9 L1470.9 620.5 L1497.6 622.3 L1524.3 620.4 L1551.1 617.6 L1577.8 615.3 L1620.6 610.2 L1652.6 610.6 L1684.7 611.3 L1706.1 611.1 L1727.5 615.2 L1759.5 622.8 L1791.6 634.3" fill="none" stroke="#c8003c" stroke-width="1.1"/><rect x="1146.7" y="669.9" width="7" height="7" fill="#c8003c"/><rect x="1149.2" y="672.4" width="2" height="2" fill="#fff" opacity=".7"/><rect x="1200.2" y="659.7" width="7" height="7" fill="#c8003c"/><rect x="1202.7" y="662.2" width="2" height="2" fill="#fff" opacity=".7"/><rect x="1253.6" y="645.7" width="7" height="7" fill="#c8003c"/><rect x="1256.1" y="648.2" width="2" height="2" fill="#fff" opacity=".7"/><rect x="1307.0" y="636.1" width="7" height="7" fill="#c8003c"/><rect x="1309.5" y="638.6" width="2" height="2" fill="#fff" opacity=".7"/><rect x="1360.5" y="621.6" width="7" height="7" fill="#c8003c"/><rect x="1363.0" y="624.1" width="2" height="2" fill="#fff" opacity=".7"/><rect x="1387.2" y="613.7" width="7" height="7" fill="#c8003c"/><rect x="1389.7" y="616.2" width="2" height="2" fill="#fff" opacity=".7"/><rect x="1414.0" y="610.7" width="7" height="7" fill="#c8003c"/><rect x="1416.5" y="613.2" width="2" height="2" fill="#fff" opacity=".7"/><rect x="1440.7" y="609.4" width="7" height="7" fill="#c8003c"/><rect x="1443.2" y="611.9" width="2" height="2" fill="#fff" opacity=".7"/><rect x="1467.4" y="617.0" width="7" height="7" fill="#c8003c"/><rect x="1469.9" y="619.5" width="2" height="2" fill="#fff" opacity=".7"/><rect x="1494.1" y="618.8" width="7" height="7" fill="#c8003c"/><rect x="1496.6" y="621.3" width="2" height="2" fill="#fff" opacity=".7"/><rect x="1520.8" y="616.9" width="7" height="7" fill="#c8003c"/><rect x="1523.3" y="619.4" width="2" height="2" fill="#fff" opacity=".7"/><rect x="1547.6" y="614.1" width="7" height="7" fill="#c8003c"/><rect x="1550.1" y="616.6" width="2" height="2" fill="#fff" opacity=".7"/><rect x="1574.3" y="611.8" width="7" height="7" fill="#c8003c"/><rect x="1576.8" y="614.3" width="2" height="2" fill="#fff" opacity=".7"/><rect x="1617.1" y="606.7" width="7" height="7" fill="#c8003c"/><rect x="1619.6" y="609.2" width="2" height="2" fill="#fff" opacity=".7"/><rect x="1649.1" y="607.1" width="7" height="7" fill="#c8003c"/><rect x="1651.6" y="609.6" width="2" height="2" fill="#fff" opacity=".7"/><rect x="1681.2" y="607.8" width="7" height="7" fill="#c8003c"/><rect x="1683.7" y="610.3" width="2" height="2" fill="#fff" opacity=".7"/><rect x="1702.6" y="607.6" width="7" height="7" fill="#c8003c"/><rect x="1705.1" y="610.1" width="2" height="2" fill="#fff" opacity=".7"/><rect x="1724.0" y="611.7" width="7" height="7" fill="#c8003c"/><rect x="1726.5" y="614.2" width="2" height="2" fill="#fff" opacity=".7"/><rect x="1756.0" y="619.3" width="7" height="7" fill="#c8003c"/><rect x="1758.5" y="621.8" width="2" height="2" fill="#fff" opacity=".7"/><rect x="1788.1" y="630.8" width="7" height="7" fill="#c8003c"/><rect x="1790.6" y="633.3" width="2" height="2" fill="#fff" opacity=".7"/><path d="M1150.2 620.0 L1203.7 608.2 L1257.1 591.9 L1310.5 580.8 L1364.0 563.9 L1390.7 554.7 L1417.5 551.3 L1444.2 549.7 L1470.9 558.6 L1497.6 560.6 L1524.3 558.5 L1551.1 555.3 L1577.8 552.7 L1620.6 546.6 L1652.6 547.1 L1684.7 548.0 L1706.1 547.6 L1727.5 552.4 L1759.5 561.3 L1791.6 574.7" fill="none" stroke="#c0007c" stroke-width="1.1"/><rect x="1146.7" y="616.5" width="7" height="7" fill="#c0007c"/><rect x="1149.2" y="619.0" width="2" height="2" fill="#fff" opacity=".7"/><rect x="1200.2" y="604.7" width="7" height="7" fill="#c0007c"/><rect x="1202.7" y="607.2" width="2" height="2" fill="#fff" opacity=".7"/><rect x="1253.6" y="588.4" width="7" height="7" fill="#c0007c"/><rect x="1256.1" y="590.9" width="2" height="2" fill="#fff" opacity=".7"/><rect x="1307.0" y="577.3" width="7" height="7" fill="#c0007c"/><rect x="1309.5" y="579.8" width="2" height="2" fill="#fff" opacity=".7"/><rect x="1360.5" y="560.4" width="7" height="7" fill="#c0007c"/><rect x="1363.0" y="562.9" width="2" height="2" fill="#fff" opacity=".7"/><rect x="1387.2" y="551.2" width="7" height="7" fill="#c0007c"/><rect x="1389.7" y="553.7" width="2" height="2" fill="#fff" opacity=".7"/><rect x="1414.0" y="547.8" width="7" height="7" fill="#c0007c"/><rect x="1416.5" y="550.3" width="2" height="2" fill="#fff" opacity=".7"/><rect x="1440.7" y="546.2" width="7" height="7" fill="#c0007c"/><rect x="1443.2" y="548.7" width="2" height="2" fill="#fff" opacity=".7"/><rect x="1467.4" y="555.1" width="7" height="7" fill="#c0007c"/><rect x="1469.9" y="557.6" width="2" height="2" fill="#fff" opacity=".7"/><rect x="1494.1" y="557.1" width="7" height="7" fill="#c0007c"/><rect x="1496.6" y="559.6" width="2" height="2" fill="#fff" opacity=".7"/><rect x="1520.8" y="555.0" width="7" height="7" fill="#c0007c"/><rect x="1523.3" y="557.5" width="2" height="2" fill="#fff" opacity=".7"/><rect x="1547.6" y="551.8" width="7" height="7" fill="#c0007c"/><rect x="1550.1" y="554.3" width="2" height="2" fill="#fff" opacity=".7"/><rect x="1574.3" y="549.2" width="7" height="7" fill="#c0007c"/><rect x="1576.8" y="551.7" width="2" height="2" fill="#fff" opacity=".7"/><rect x="1617.1" y="543.1" width="7" height="7" fill="#c0007c"/><rect x="1619.6" y="545.6" width="2" height="2" fill="#fff" opacity=".7"/><rect x="1649.1" y="543.6" width="7" height="7" fill="#c0007c"/><rect x="1651.6" y="546.1" width="2" height="2" fill="#fff" opacity=".7"/><rect x="1681.2" y="544.5" width="7" height="7" fill="#c0007c"/><rect x="1683.7" y="547.0" width="2" height="2" fill="#fff" opacity=".7"/><rect x="1702.6" y="544.1" width="7" height="7" fill="#c0007c"/><rect x="1705.1" y="546.6" width="2" height="2" fill="#fff" opacity=".7"/><rect x="1724.0" y="548.9" width="7" height="7" fill="#c0007c"/><rect x="1726.5" y="551.4" width="2" height="2" fill="#fff" opacity=".7"/><rect x="1756.0" y="557.8" width="7" height="7" fill="#c0007c"/><rect x="1758.5" y="560.3" width="2" height="2" fill="#fff" opacity=".7"/><rect x="1788.1" y="571.2" width="7" height="7" fill="#c0007c"/><rect x="1790.6" y="573.7" width="2" height="2" fill="#fff" opacity=".7"/><path d="M1150.2 562.5 L1203.7 548.8 L1257.1 530.2 L1310.5 517.3 L1364.0 497.9 L1390.7 487.4 L1417.5 483.4 L1444.2 481.6 L1470.9 491.9 L1497.6 494.2 L1524.3 491.7 L1551.1 488.0 L1577.8 485.0 L1620.6 478.1 L1652.6 478.6 L1684.7 479.6 L1706.1 479.3 L1727.5 484.6 L1759.5 495.0 L1791.6 510.3" fill="none" stroke="#e000e0" stroke-width="1.1"/><rect x="1146.7" y="559.0" width="7" height="7" fill="#e000e0"/><rect x="1149.2" y="561.5" width="2" height="2" fill="#fff" opacity=".7"/><rect x="1200.2" y="545.3" width="7" height="7" fill="#e000e0"/><rect x="1202.7" y="547.8" width="2" height="2" fill="#fff" opacity=".7"/><rect x="1253.6" y="526.7" width="7" height="7" fill="#e000e0"/><rect x="1256.1" y="529.2" width="2" height="2" fill="#fff" opacity=".7"/><rect x="1307.0" y="513.8" width="7" height="7" fill="#e000e0"/><rect x="1309.5" y="516.3" width="2" height="2" fill="#fff" opacity=".7"/><rect x="1360.5" y="494.4" width="7" height="7" fill="#e000e0"/><rect x="1363.0" y="496.9" width="2" height="2" fill="#fff" opacity=".7"/><rect x="1387.2" y="483.9" width="7" height="7" fill="#e000e0"/><rect x="1389.7" y="486.4" width="2" height="2" fill="#fff" opacity=".7"/><rect x="1414.0" y="479.9" width="7" height="7" fill="#e000e0"/><rect x="1416.5" y="482.4" width="2" height="2" fill="#fff" opacity=".7"/><rect x="1440.7" y="478.1" width="7" height="7" fill="#e000e0"/><rect x="1443.2" y="480.6" width="2" height="2" fill="#fff" opacity=".7"/><rect x="1467.4" y="488.4" width="7" height="7" fill="#e000e0"/><rect x="1469.9" y="490.9" width="2" height="2" fill="#fff" opacity=".7"/><rect x="1494.1" y="490.7" width="7" height="7" fill="#e000e0"/><rect x="1496.6" y="493.2" width="2" height="2" fill="#fff" opacity=".7"/><rect x="1520.8" y="488.2" width="7" height="7" fill="#e000e0"/><rect x="1523.3" y="490.7" width="2" height="2" fill="#fff" opacity=".7"/><rect x="1547.6" y="484.5" width="7" height="7" fill="#e000e0"/><rect x="1550.1" y="487.0" width="2" height="2" fill="#fff" opacity=".7"/><rect x="1574.3" y="481.5" width="7" height="7" fill="#e000e0"/><rect x="1576.8" y="484.0" width="2" height="2" fill="#fff" opacity=".7"/><rect x="1617.1" y="474.6" width="7" height="7" fill="#e000e0"/><rect x="1619.6" y="477.1" width="2" height="2" fill="#fff" opacity=".7"/><rect x="1649.1" y="475.1" width="7" height="7" fill="#e000e0"/><rect x="1651.6" y="477.6" width="2" height="2" fill="#fff" opacity=".7"/><rect x="1681.2" y="476.1" width="7" height="7" fill="#e000e0"/><rect x="1683.7" y="478.6" width="2" height="2" fill="#fff" opacity=".7"/><rect x="1702.6" y="475.8" width="7" height="7" fill="#e000e0"/><rect x="1705.1" y="478.3" width="2" height="2" fill="#fff" opacity=".7"/><rect x="1724.0" y="481.1" width="7" height="7" fill="#e000e0"/><rect x="1726.5" y="483.6" width="2" height="2" fill="#fff" opacity=".7"/><rect x="1756.0" y="491.5" width="7" height="7" fill="#e000e0"/><rect x="1758.5" y="494.0" width="2" height="2" fill="#fff" opacity=".7"/><rect x="1788.1" y="506.8" width="7" height="7" fill="#e000e0"/><rect x="1790.6" y="509.3" width="2" height="2" fill="#fff" opacity=".7"/></svg>
<div style="position:absolute;left:1096px;top:944px;white-space:pre;font-size:14.5px;color:#333;letter-spacing:-0.7px;width:51px;text-align:right">1000</div>
<div style="position:absolute;left:1096px;top:890px;white-space:pre;font-size:14.5px;color:#333;letter-spacing:-0.7px;width:51px;text-align:right">2000</div>
<div style="position:absolute;left:1096px;top:837px;white-space:pre;font-size:14.5px;color:#333;letter-spacing:-0.7px;width:51px;text-align:right">3000</div>
<div style="position:absolute;left:1096px;top:783px;white-space:pre;font-size:14.5px;color:#333;letter-spacing:-0.7px;width:51px;text-align:right">4000</div>
<div style="position:absolute;left:1096px;top:729px;white-space:pre;font-size:14.5px;color:#333;letter-spacing:-0.7px;width:51px;text-align:right">000</div>
<div style="position:absolute;left:1096px;top:675px;white-space:pre;font-size:14.5px;color:#333;letter-spacing:-0.7px;width:51px;text-align:right">6000</div>
<div style="position:absolute;left:1096px;top:621px;white-space:pre;font-size:14.5px;color:#333;letter-spacing:-0.7px;width:51px;text-align:right">7000</div>
<div style="position:absolute;left:1096px;top:567px;white-space:pre;font-size:14.5px;color:#333;letter-spacing:-0.7px;width:51px;text-align:right">8000</div>
<div style="position:absolute;left:1096px;top:513px;white-space:pre;font-size:14.5px;color:#333;letter-spacing:-0.7px;width:51px;text-align:right">9000</div>
<div style="position:absolute;left:1096px;top:460px;white-space:pre;font-size:14.5px;color:#333;letter-spacing:-0.7px;width:51px;text-align:right">10000</div>
<div style="position:absolute;left:1087px;top:721px;width:62px;height:14px;transform:rotate(-90deg);font-size:13.5px;color:#333;white-space:nowrap;text-align:center;line-height:14px">Fuel Value</div>
<div style="position:absolute;left:1802px;top:80px;width:18px;height:904px;background:#f0f0f0"></div>
<svg style="position:absolute;left:1806px;top:88px" width="10" height="7" viewBox="0 0 10 7"><path d="M1 6L5 2L9 6" fill="none" stroke="#555" stroke-width="1.8"/></svg>
<div style="position:absolute;left:1803px;top:100px;width:16px;height:795px;background:#c2c2c2"></div>
<svg style="position:absolute;left:1806px;top:970px" width="10" height="7" viewBox="0 0 10 7"><path d="M1 1L5 5L9 1" fill="none" stroke="#555" stroke-width="1.6"/></svg>
<div style="position:absolute;left:96px;top:984px;width:1724px;height:20px;background:#f0f0f0"></div>
<div style="position:absolute;left:128px;top:985px;width:1634px;height:18px;background:#c2c2c2"></div>
<svg style="position:absolute;left:104px;top:989px" width="7" height="10" viewBox="0 0 7 10"><path d="M6 1L2 5L6 9" fill="none" stroke="#555" stroke-width="1.6"/></svg>
<svg style="position:absolute;left:1788px;top:989px" width="7" height="10" viewBox="0 0 7 10"><path d="M1 1L5 5L1 9" fill="none" stroke="#555" stroke-width="1.6"/></svg>
<div style="position:absolute;left:96px;top:1004px;width:1724px;height:28px;background:#f0f0f0;border-top:1px solid #d8d8d8"></div>
<div style="position:absolute;left:115px;top:1014px;white-space:pre;font-size:14px;color:#222">Driver Installed</div>
<div style="position:absolute;left:234px;top:1014px;white-space:pre;font-size:14px;color:#222">Off Line</div>
<div style="position:absolute;left:226px;top:1007px;width:1px;height:25px;background:#d6d6d6"></div>
<div style="position:absolute;left:288px;top:1007px;width:1px;height:25px;background:#d6d6d6"></div>
<div style="position:absolute;left:372px;top:1007px;width:1px;height:25px;background:#d6d6d6"></div>
<div style="position:absolute;left:432px;top:1007px;width:1px;height:25px;background:#d6d6d6"></div>
<div style="position:absolute;left:487px;top:1007px;width:1px;height:25px;background:#d6d6d6"></div>
<div style="position:absolute;left:556px;top:1007px;width:1px;height:25px;background:#d6d6d6"></div>
<div style="position:absolute;left:96px;top:1032px;width:1724px;height:48px;background:#0a0d14"></div>
<div style="position:absolute;left:96px;top:1032px;width:57px;height:48px;background:#07090e"></div>
<svg style="position:absolute;left:115px;top:1046px" width="21" height="21" viewBox="0 0 21 21"><path d="M0 3l8.5-1.2V10H0zM9.5 1.6L21 0v10H9.5zM0 11h8.5v8.2L0 18zM9.5 11H21v10l-11.5-1.6z" fill="#fff"/></svg>
<div style="position:absolute;left:153px;top:1032px;width:414px;height:48px;background:#f0f0f0"></div>
<div style="position:absolute;left:165px;top:1044px;width:25px;height:25px;border:3.5px solid #111;border-radius:50%"></div>
<div style="position:absolute;left:203px;top:1049.5px;white-space:pre;font-size:16.6px;color:#444">Type here to search</div>
<svg style="position:absolute;left:534px;top:1045px" width="16" height="22" viewBox="0 0 16 22"><rect x="4.5" y="1" width="7" height="13" rx="3.5" fill="none" stroke="#555" stroke-width="1.3"/><path d="M1.5 10q0 6 6.5 6t6.5-6M8 16v4M4 20.5h8" fill="none" stroke="#555" stroke-width="1.3"/></svg>
<svg style="position:absolute;left:585px;top:1046px" width="21" height="21" viewBox="0 0 21 21"><rect x="2" y="5" width="12" height="11" fill="none" stroke="#fff" stroke-width="1.5"/><path d="M0 2h16M0 19h16M19 3v4M19 10v10" stroke="#fff" stroke-width="1.5"/></svg>
<svg style="position:absolute;left:644px;top:1043px" width="25" height="26" viewBox="0 0 25 26"><path d="M3 14C3 5 10 1 15 1c6 0 10 4 10 10v3H9c0 5 4 7 8 7 3 0 5-1 7-2v5c-2 1-5 2-8 2C7 26 3 21 3 14zm6-4h10c0-3-2-5-5-5s-5 2-5 5z" fill="#1f7be0"/></svg>
<svg style="position:absolute;left:701px;top:1045px" width="28" height="23" viewBox="0 0 28 23"><path d="M0 2h9l2 3h17v18H0z" fill="#f3d46a"/><path d="M0 7h28v16H0z" fill="#f8df7c"/><path d="M6 12h16v11h-4v-6h-8v6H6z" fill="#3aa0e0"/></svg>
<div style="position:absolute;left:745px;top:1032px;width:58px;height:48px;background:#2f333b"></div>
<div style="position:absolute;left:745px;top:1077px;width:58px;height:3px;background:#76b9ed"></div>
<svg style="position:absolute;left:759px;top:1040px" width="30" height="30" viewBox="0 0 32 32">
<polygon points="31.8,16.0 25.8,17.7 29.6,21.0 24.7,21.0 28.1,26.2 22.4,23.7 23.2,28.6 19.4,25.4 18.7,31.6 16.0,26.0 13.5,30.3 12.6,25.4 8.1,29.7 9.6,23.7 4.9,25.3 7.3,21.0 1.2,21.4 6.2,17.7 1.5,16.0 6.2,14.3 1.2,10.6 7.3,11.0 4.9,6.7 9.6,8.3 8.1,2.3 12.6,6.6 13.5,1.7 16.0,6.0 18.7,0.4 19.4,6.6 23.2,3.4 22.4,8.3 28.1,5.8 24.7,11.0 29.6,11.0 25.8,14.3" fill="#e03010"/>
<polygon points="28.9,17.2 25.2,18.5 27.8,21.5 23.8,21.5 25.2,25.2 21.4,23.8 21.5,27.8 18.4,25.2 17.1,29.0 15.1,25.5 12.6,28.5 12.0,24.6 8.5,26.6 9.3,22.7 5.3,23.4 7.4,20.0 3.4,19.3 6.5,16.8 3.1,14.8 6.8,13.5 4.2,10.5 8.2,10.5 6.8,6.8 10.6,8.2 10.5,4.2 13.6,6.8 14.9,3.0 16.9,6.5 19.4,3.5 20.0,7.4 23.5,5.4 22.7,9.3 26.7,8.6 24.6,12.0 28.6,12.7 25.5,15.2" fill="#f8b828"/>
<path d="M19 9q9 2 9 8t-8 7q4-3 3.5-7T19 9z" fill="#fff020" stroke="#302000" stroke-width=".8"/>
<path transform="translate(15 16) scale(.86) translate(-16 -16)" d="M5 5h12v3h-3v6.5l7.5-6.5h-2V5h9v3h-2.5l-7.5 6.5 8.5 9.5h2v3H16.5v-3h2.5l-6-6.5v6.5h3v3H5v-3h3V8H5z" fill="#1818d0" stroke="#000020" stroke-width="1.8"/>
<path d="M18 7h12M25 1.5v11M21 3l8 8" stroke="#fff" stroke-width="1.4" opacity=".9"/></svg>
<svg style="position:absolute;left:1526px;top:1046px" width="19" height="20" viewBox="0 0 19 20"><circle cx="12" cy="5" r="3.2" fill="none" stroke="#fff" stroke-width="1.4"/><path d="M7 13q1-5 5-5t5 5" fill="none" stroke="#fff" stroke-width="1.4"/><circle cx="6" cy="10" r="3.2" fill="none" stroke="#fff" stroke-width="1.4"/><path d="M1 19q1-5 5-5t5 5" fill="none" stroke="#fff" stroke-width="1.4"/></svg>
<svg style="position:absolute;left:1570px;top:1051px" width="18" height="11" viewBox="0 0 18 11"><path d="M1 10L9 2l8 8" fill="none" stroke="#fff" stroke-width="1.5"/></svg>
<svg style="position:absolute;left:1597px;top:1048px" width="22" height="16" viewBox="0 0 22 16"><path d="M4 1v4M7 1v4M2.5 5h6v3q0 3-3 3t-3-3zM5.5 11v4" fill="none" stroke="#fff" stroke-width="1.3"/><rect x="8" y="5" width="12" height="9" fill="none" stroke="#fff" stroke-width="1.4"/><rect x="20" y="8" width="2" height="3" fill="#fff"/></svg>
<svg style="position:absolute;left:1626px;top:1048px" width="21" height="18" viewBox="0 0 21 18"><rect x="1" y="1" width="5" height="7" fill="none" stroke="#fff" stroke-width="1.2"/><path d="M6 2h14v10H3V8M11 12v4M7 16.5h9M3.5 9v7" fill="none" stroke="#fff" stroke-width="1.4"/></svg>
<svg style="position:absolute;left:1655px;top:1047px" width="20" height="17" viewBox="0 0 20 17"><path d="M1 5h4l5-4v15l-5-4H1z" fill="none" stroke="#fff" stroke-width="1.4"/><path d="M13 5q2 3 0 6M15.5 3q3.5 5 0 10" fill="none" stroke="#fff" stroke-width="1.3"/><path d="M18 1q4 7 0 15" fill="none" stroke="#888" stroke-width="1.2"/></svg>
<div style="position:absolute;left:1690px;top:1039px;white-space:pre;font-size:14px;color:#fff">10:29 PM</div>
<div style="position:absolute;left:1683px;top:1060px;white-space:pre;font-size:14px;color:#fff">11/12/2018</div>
<svg style="position:absolute;left:1775px;top:1046px" width="20" height="20" viewBox="0 0 20 20"><path d="M1 1h18v13h-7l-3 4-3-4H1z" fill="none" stroke="#fff" stroke-width="1.4"/></svg>
<div style="position:absolute;left:1819px;top:1032px;width:1px;height:48px;background:#3a3d44"></div>
<div style="position:absolute;left:1820px;top:50px;width:4px;height:982px;background:#f0f0f0"></div>
<div style="position:absolute;left:1824px;top:0px;width:96px;height:1080px;background:#000"></div>
</body></html>
